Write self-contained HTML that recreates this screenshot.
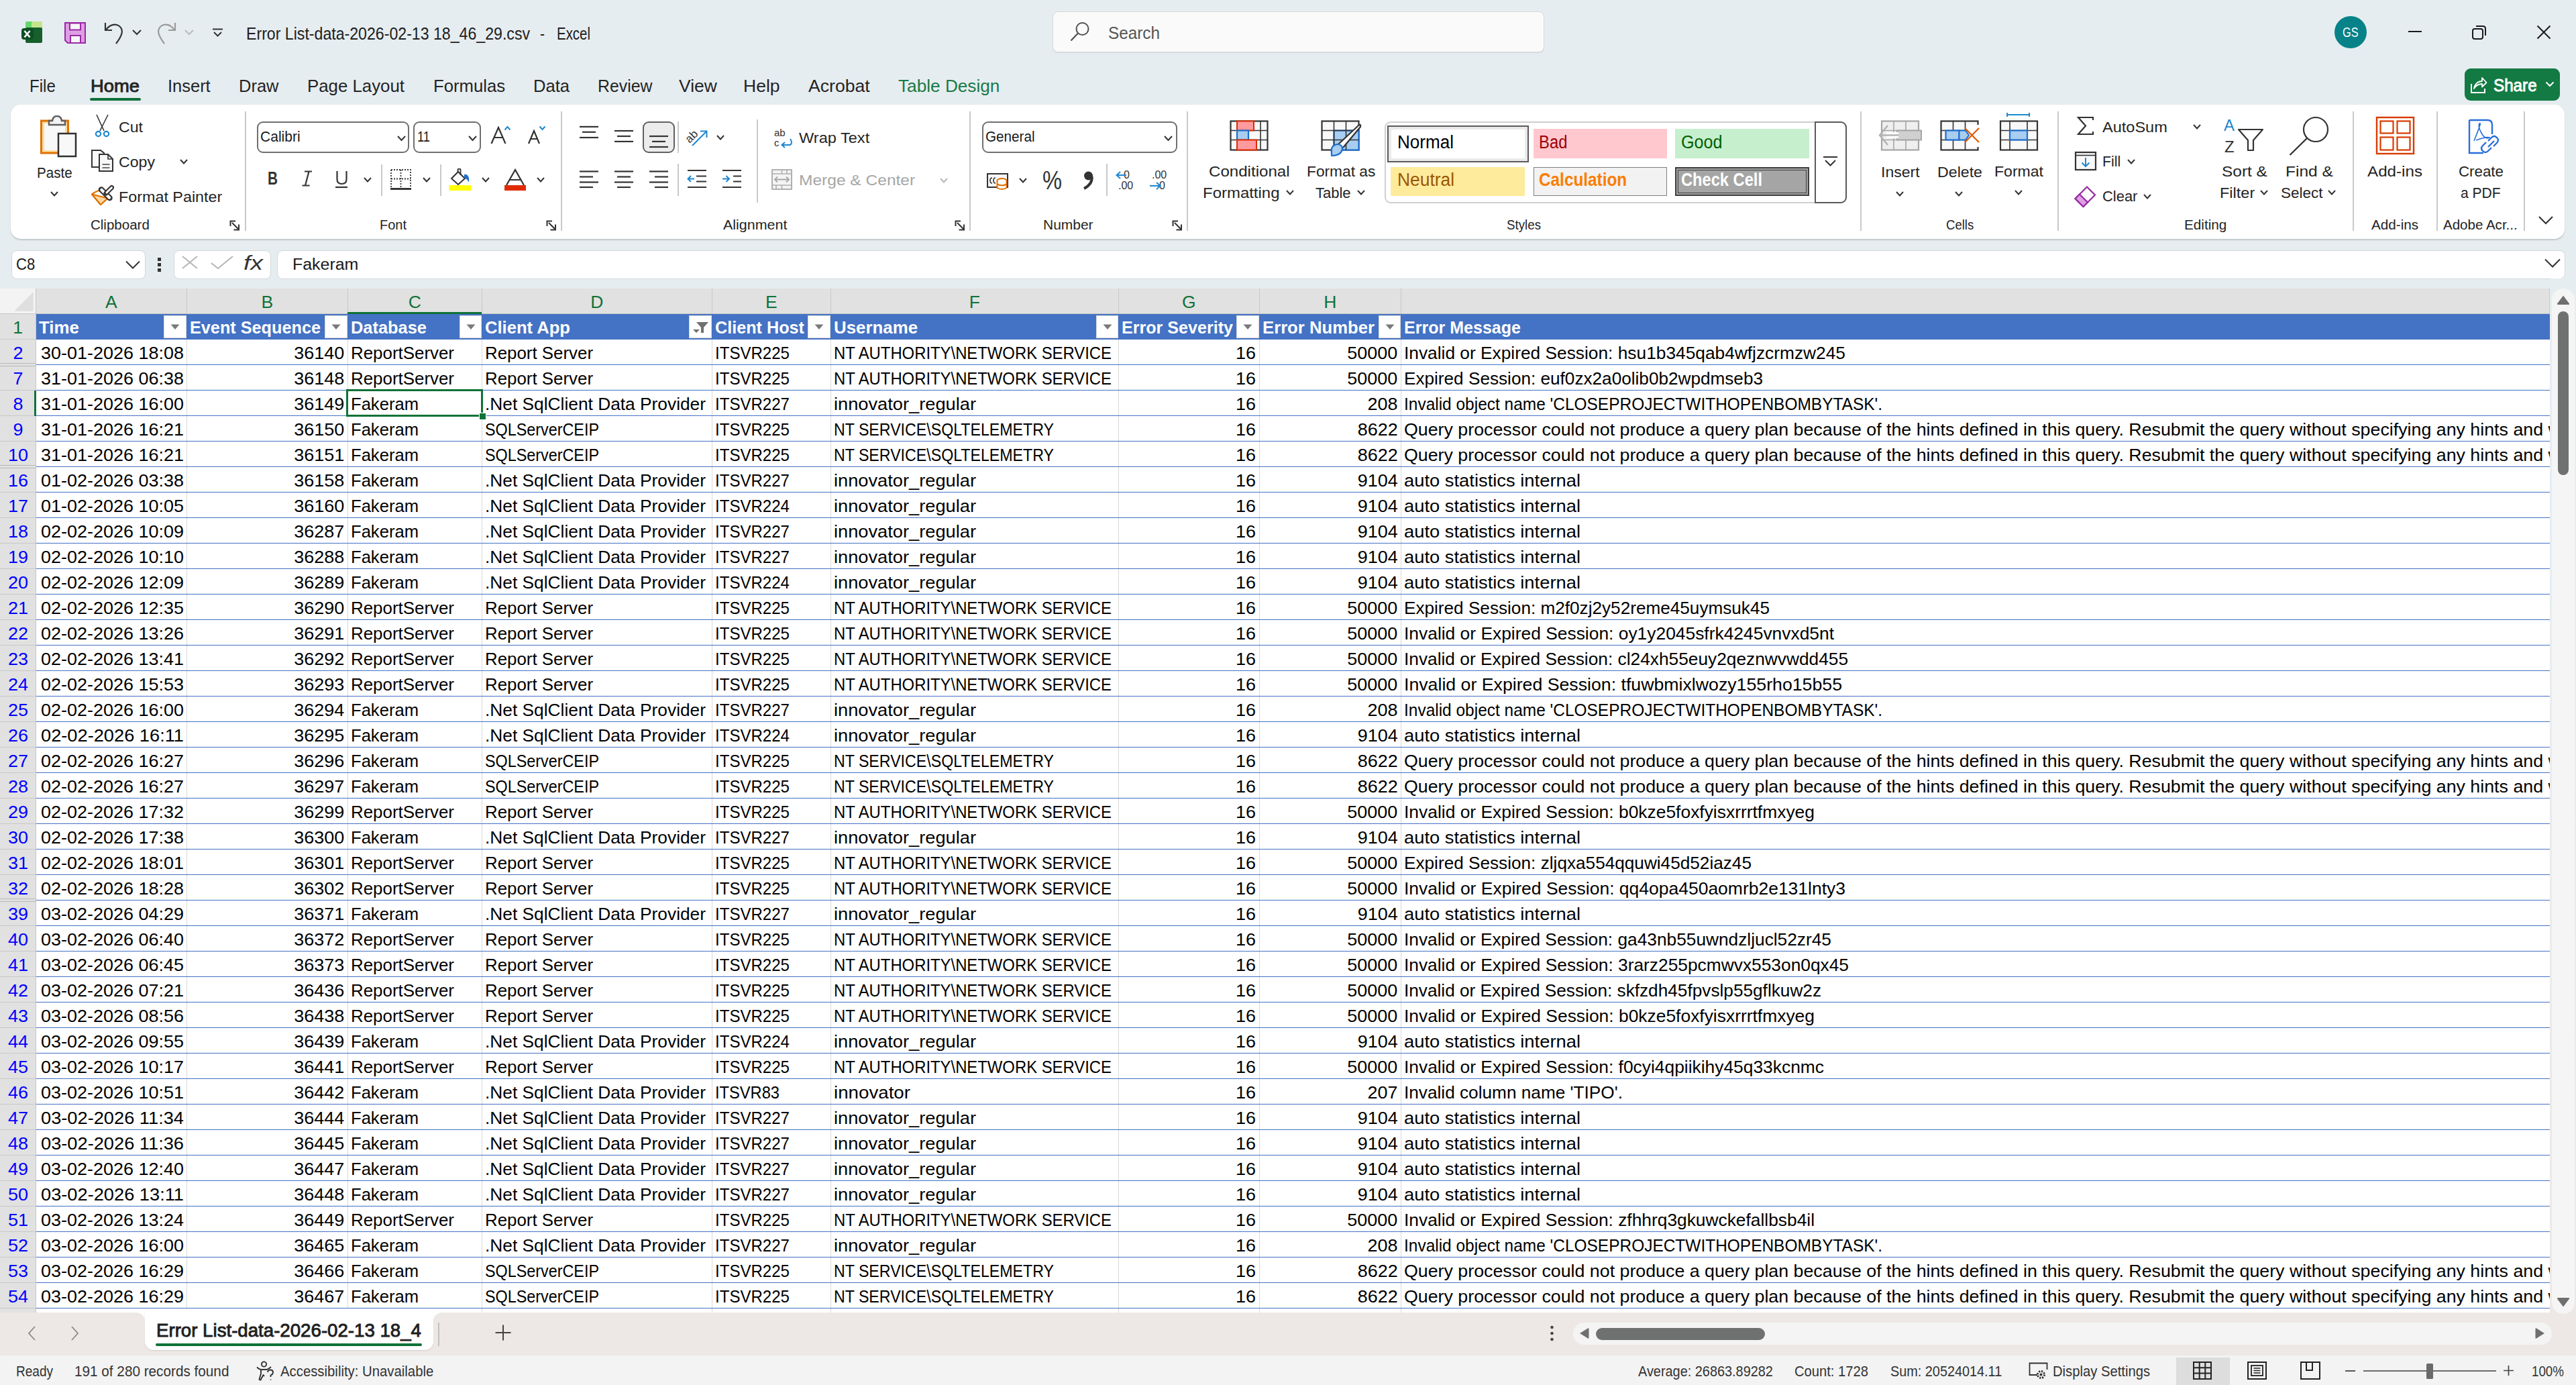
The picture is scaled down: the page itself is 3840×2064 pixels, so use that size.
<!DOCTYPE html>
<html><head><meta charset="utf-8"><style>
html,body{margin:0;padding:0;width:3840px;height:2064px;overflow:hidden;background:#fff}
body{position:relative;font-family:"Liberation Sans", sans-serif}
body>div,body>span,body>svg{position:absolute}
.t{white-space:pre;display:inline-block}
</style></head><body>
<div style="left:0px;top:0px;width:3840px;height:430px;background:#e6edf1"></div>
<svg style="left:31px;top:31px;" width="33" height="34" viewBox="0 0 33 34">
<rect x="7" y="1" width="25" height="12" rx="2" fill="#66d66c"/>
<rect x="16" y="1" width="16" height="12" rx="2" fill="#c5e58c"/>
<rect x="7" y="10" width="25" height="23" rx="2" fill="#175f2b"/>
<rect x="1" y="11" width="18" height="17" rx="4" fill="#0f4f25"/>
<path d="M5.5 15 L13.5 24.5 M13.5 15 L5.5 24.5" stroke="#fff" stroke-width="2.6"/>
</svg>
<svg style="left:96px;top:33px;" width="32" height="32" viewBox="0 0 32 32">
<path d="M1 1 H31 V31 H5 L1 27 Z" fill="#de9fe3" stroke="#9a2aa5" stroke-width="2"/>
<rect x="8" y="1.5" width="16" height="10" fill="#f7f7f7" stroke="#9a2aa5" stroke-width="2"/>
<rect x="9" y="20" width="15" height="11" fill="#f7f7f7" stroke="#9a2aa5" stroke-width="2"/>
</svg>
<svg style="left:152px;top:31px;" width="36" height="36" viewBox="0 0 36 36">
<path d="M5 3 V14 H15" fill="none" stroke="#333" stroke-width="2.2"/>
<path d="M5.5 14 C11 6 20 3 26 8 C33 14 30 22 21 34" fill="none" stroke="#333" stroke-width="2.2"/>
</svg>
<svg style="left:196px;top:43px;" width="16" height="11" viewBox="0 0 16 11"><path d="M2 2 L8 8 L14 2" fill="none" stroke="#333" stroke-width="2"/></svg>
<svg style="left:230px;top:31px;" width="36" height="36" viewBox="0 0 36 36">
<path d="M31 3 V14 H21" fill="none" stroke="#999" stroke-width="2.2"/>
<path d="M30.5 14 C25 6 16 3 10 8 C3 14 6 22 15 34" fill="none" stroke="#999" stroke-width="2.2"/>
</svg>
<svg style="left:274px;top:43px;" width="16" height="11" viewBox="0 0 16 11"><path d="M2 2 L8 8 L14 2" fill="none" stroke="#bbb" stroke-width="2"/></svg>
<svg style="left:316px;top:41px;" width="18" height="16" viewBox="0 0 18 16"><path d="M1 2.5 H16" stroke="#333" stroke-width="2"/><path d="M3 7 L8.5 12.5 L14 7" fill="none" stroke="#333" stroke-width="2"/></svg>
<span class="t" style="top:37.54px;font-size:25px;line-height:25px;color:#202020;left:367px;transform-origin:0 0;transform:scaleX(0.9252);">Error List-data-2026-02-13 18_46_29.csv</span>
<span class="t" style="top:37.54px;font-size:25px;line-height:25px;color:#202020;left:805px;transform-origin:0 0;transform:scaleX(0.8405);">-</span>
<span class="t" style="top:37.54px;font-size:25px;line-height:25px;color:#202020;left:830.4px;transform-origin:0 0;transform:scaleX(0.8178);">Excel</span>
<div style="left:1569px;top:17px;width:733px;height:61px;background:#fafafa;border:1px solid #d6d9db;border-radius:8px;box-sizing:border-box;box-shadow:0 1px 1px rgba(0,0,0,0.08)"></div>
<svg style="left:1593px;top:30px;" width="34" height="36" viewBox="0 0 34 36"><circle cx="20.5" cy="13" r="9" fill="none" stroke="#505050" stroke-width="2"/><path d="M14 19.5 L3.5 30.5" stroke="#505050" stroke-width="2.2"/></svg>
<span class="t" style="top:35.69px;font-size:26px;line-height:26px;color:#555;left:1652px;transform-origin:0 0;transform:scaleX(0.9346);">Search</span>
<div style="left:3480px;top:24px;width:48px;height:48px;background:#078288;border-radius:50%"></div>
<span class="t" style="top:39.19px;font-size:19.5px;line-height:19.5px;color:#fff;left:3491.7px;transform-origin:0 0;transform:scaleX(0.8373);">GS</span>
<div style="left:3590px;top:46px;width:20px;height:2px;background:#1a1a1a"></div>
<svg style="left:3684px;top:36px;" width="24" height="24" viewBox="0 0 24 24"><rect x="2" y="7" width="15" height="15" rx="3" fill="none" stroke="#1a1a1a" stroke-width="2"/><path d="M7 3 H17 Q21 3 21 7 V17" fill="none" stroke="#1a1a1a" stroke-width="2"/></svg>
<svg style="left:3780px;top:36px;" width="24" height="24" viewBox="0 0 24 24"><path d="M2.5 2.5 L21.5 21.5 M21.5 2.5 L2.5 21.5" stroke="#1a1a1a" stroke-width="2"/></svg>
<div style="left:3674px;top:102px;width:142px;height:48px;background:#137a43;border-radius:9px"></div>
<svg style="left:3682px;top:113px;" width="26" height="27" viewBox="0 0 26 27"><path d="M2 12 V25 H22 V19" fill="none" stroke="#fff" stroke-width="2"/><path d="M6 19 C7 12 12 8 18 8 V3 L24.5 10 L18 16.5 V12 C12 12 9 14 6 19 Z" fill="none" stroke="#fff" stroke-width="1.8" stroke-linejoin="round"/></svg>
<span class="t" style="top:113.67px;font-size:26.5px;line-height:26.5px;color:#fff;-webkit-text-stroke:0.9px #fff;left:3716.7px;transform-origin:0 0;transform:scaleX(0.9135);">Share</span>
<svg style="left:3794px;top:121px;" width="14" height="10" viewBox="0 0 14 10"><path d="M1.5 1.5 L7 7 L12.5 1.5" fill="none" stroke="#fff" stroke-width="2"/></svg>
<span class="t" style="top:114.57px;font-size:26.5px;line-height:26.5px;color:#242424;left:43.5px;transform-origin:0 0;transform:scaleX(0.9086);">File</span>
<span class="t" style="top:114.57px;font-size:26.5px;line-height:26.5px;color:#242424;-webkit-text-stroke:0.9px #242424;left:135px;transform-origin:0 0;transform:scaleX(1.0325);">Home</span>
<span class="t" style="top:114.57px;font-size:26.5px;line-height:26.5px;color:#242424;left:250px;transform-origin:0 0;transform:scaleX(0.9611);">Insert</span>
<span class="t" style="top:114.57px;font-size:26.5px;line-height:26.5px;color:#242424;left:356px;transform-origin:0 0;transform:scaleX(0.9621);">Draw</span>
<span class="t" style="top:114.57px;font-size:26.5px;line-height:26.5px;color:#242424;left:458px;transform-origin:0 0;transform:scaleX(0.9743);">Page Layout</span>
<span class="t" style="top:114.57px;font-size:26.5px;line-height:26.5px;color:#242424;left:645.6px;transform-origin:0 0;transform:scaleX(0.9696);">Formulas</span>
<span class="t" style="top:114.57px;font-size:26.5px;line-height:26.5px;color:#242424;left:794.6px;transform-origin:0 0;transform:scaleX(0.9663);">Data</span>
<span class="t" style="top:114.57px;font-size:26.5px;line-height:26.5px;color:#242424;left:890.6px;transform-origin:0 0;transform:scaleX(0.9368);">Review</span>
<span class="t" style="top:114.57px;font-size:26.5px;line-height:26.5px;color:#242424;left:1011.7px;transform-origin:0 0;transform:scaleX(0.9970);">View</span>
<span class="t" style="top:114.57px;font-size:26.5px;line-height:26.5px;color:#242424;left:1108px;transform-origin:0 0;">Help</span>
<span class="t" style="top:114.57px;font-size:26.5px;line-height:26.5px;color:#242424;left:1205px;transform-origin:0 0;transform:scaleX(1.0041);">Acrobat</span>
<span class="t" style="top:114.57px;font-size:26.5px;line-height:26.5px;color:#1a7a45;left:1338.6px;transform-origin:0 0;transform:scaleX(0.9882);">Table Design</span>
<div style="left:133.5px;top:146px;width:76px;height:3.8px;background:#0f7038;border-radius:2px"></div>
<div style="left:16px;top:156px;width:3807px;height:200px;background:#fff;border-radius:15px;box-shadow:0 1.5px 2px rgba(0,0,0,0.16)"></div>
<svg style="left:58px;top:172px;" width="58" height="64" viewBox="0 0 58 64">
<rect x="3.5" y="8" width="40" height="48" fill="#fcdca0" stroke="#e07000" stroke-width="3"/>
<rect x="8" y="12" width="31" height="40" fill="#f8f8f8"/>
<path d="M15 14 V8 H20 Q21 1 27 1 Q33 1 34 8 H39 V14 Z" fill="#f3f3f3" stroke="#5f5f5f" stroke-width="2.5"/>
<rect x="29" y="27" width="26" height="34" fill="#f8f8f8" stroke="#303030" stroke-width="2.5"/>
</svg>
<span class="t" style="top:246.95px;font-size:22.5px;line-height:22.5px;color:#242424;left:55.3px;transform-origin:0 0;transform:scaleX(0.9158);">Paste</span>
<svg style="left:74.0px;top:283.75px;" width="14" height="9.5" viewBox="0 0 14 9.5"><path d="M2 2 L7.0 7.5 L12 2" fill="none" stroke="#333" stroke-width="2"/></svg>
<svg style="left:140px;top:170px;" width="25" height="36" viewBox="0 0 25 36">
<path d="M4 1 L15 25 M21 1 L9 25" stroke="#333" stroke-width="1.6" fill="none"/>
<circle cx="6.5" cy="29.5" r="3.6" fill="#fff" stroke="#1e88d0" stroke-width="2.2"/>
<circle cx="18.5" cy="29.5" r="3.6" fill="#fff" stroke="#1e88d0" stroke-width="2.2"/>
</svg>
<span class="t" style="top:179.15px;font-size:22.5px;line-height:22.5px;color:#242424;left:176.5px;transform-origin:0 0;transform:scaleX(1.0281);">Cut</span>
<svg style="left:135px;top:222px;" width="35" height="36" viewBox="0 0 35 36">
<path d="M2 2 H15 L20 6 V27 H2 Z" fill="#f8f8f8" stroke="#333" stroke-width="2"/>
<path d="M13 8 H26 L33 15 V33 H13 Z" fill="#f8f8f8" stroke="#333" stroke-width="2"/>
<path d="M26 8 V15 H33" fill="none" stroke="#333" stroke-width="1.6"/>
<path d="M17.5 23 H28.5 M17.5 28 H28.5" stroke="#444" stroke-width="1.5"/>
</svg>
<span class="t" style="top:230.75px;font-size:22.5px;line-height:22.5px;color:#242424;left:176.5px;transform-origin:0 0;transform:scaleX(1.0280);">Copy</span>
<svg style="left:267.0px;top:236.25px;" width="14" height="9.5" viewBox="0 0 14 9.5"><path d="M2 2 L7.0 7.5 L12 2" fill="none" stroke="#333" stroke-width="2"/></svg>
<svg style="left:135px;top:274px;" width="35" height="34" viewBox="0 0 35 34">
<path d="M2 15.5 Q8 11 13.5 9.5 L25.5 21.5 L15 31 Z" fill="#fff" stroke="#e07000" stroke-width="2.2" stroke-linejoin="round"/>
<path d="M2 15.5 L25.5 21.5 L15 31 Z" fill="#fdd9a0" stroke="#e07000" stroke-width="2" stroke-linejoin="round"/>
<path d="M16 8.5 L28.5 21" stroke="#333" stroke-width="8.5" stroke-linecap="round"/>
<path d="M16.5 9 L28 20.5" stroke="#fafafa" stroke-width="4.5" stroke-linecap="round"/>
<path d="M23 14 L31.5 5.5" stroke="#333" stroke-width="7" stroke-linecap="round"/>
<path d="M24 13 L31.5 5.5" stroke="#fafafa" stroke-width="3" stroke-linecap="round"/>
</svg>
<span class="t" style="top:282.55px;font-size:22.5px;line-height:22.5px;color:#242424;left:177px;transform-origin:0 0;transform:scaleX(1.0369);">Format Painter</span>
<span class="t" style="top:326.39px;font-size:19.5px;line-height:19.5px;color:#242424;left:134.6px;transform-origin:0 0;transform:scaleX(1.0519);">Clipboard</span>
<svg style="left:341.5px;top:327.5px;" width="17" height="17" viewBox="0 0 17 17"><path d="M1.5 9 V1.5 H9" fill="none" stroke="#333" stroke-width="2"/><path d="M4 4 L14 14 M14 6.5 V14.5 H6.5" fill="none" stroke="#333" stroke-width="2"/></svg>
<div style="left:364.5px;top:166px;width:2px;height:178px;background:#c9c9c9"></div>
<div style="left:383px;top:180.5px;width:227px;height:47px;border:2px solid #707070;border-radius:9px;box-sizing:border-box;background:#fff"></div>
<span class="t" style="top:193.80px;font-size:21.5px;line-height:21.5px;color:#1a1a1a;left:387.6px;transform-origin:0 0;transform:scaleX(0.9797);">Calibri</span>
<svg style="left:590.5px;top:200.5px;" width="15" height="10" viewBox="0 0 15 10"><path d="M2 2 L7.5 8 L13 2" fill="none" stroke="#333" stroke-width="2"/></svg>
<div style="left:615.5px;top:180.5px;width:101.5px;height:47px;border:2px solid #707070;border-radius:9px;box-sizing:border-box;background:#fff"></div>
<span class="t" style="top:193.80px;font-size:21.5px;line-height:21.5px;color:#1a1a1a;left:622px;transform-origin:0 0;transform:scaleX(0.8509);">11</span>
<svg style="left:697.0px;top:200.5px;" width="15" height="10" viewBox="0 0 15 10"><path d="M2 2 L7.5 8 L13 2" fill="none" stroke="#333" stroke-width="2"/></svg>
<svg style="left:730px;top:188px;" width="26" height="27" viewBox="0 0 26 27"><path d="M2.5 26 L13 2 L23.5 26 M6.5 17 H19.5" fill="none" stroke="#333" stroke-width="2.2"/></svg>
<svg style="left:751px;top:187px;" width="12" height="8" viewBox="0 0 12 8"><path d="M1.5 6.5 L5.5 2 L9.5 6.5" fill="none" stroke="#1e88d0" stroke-width="2"/></svg>
<svg style="left:786px;top:193px;" width="20" height="22" viewBox="0 0 20 22"><path d="M2 21 L10 2 L18 21 M5 14 H15" fill="none" stroke="#333" stroke-width="2.2"/></svg>
<svg style="left:803px;top:187px;" width="12" height="8" viewBox="0 0 12 8"><path d="M1.5 1.5 L5.5 6 L9.5 1.5" fill="none" stroke="#1e88d0" stroke-width="2"/></svg>
<span class="t" style="top:252.30px;font-size:28px;line-height:28px;color:#333;font-weight:700;left:399px;transform-origin:0 0;transform:scaleX(0.7413);">B</span>
<svg style="left:449px;top:254px;" width="18" height="24" viewBox="0 0 18 24"><path d="M5 1.5 H16 M1.5 22.5 H12.5 M11.5 1.5 L6 22.5" fill="none" stroke="#333" stroke-width="2.2"/></svg>
<svg style="left:499px;top:254px;" width="21" height="27" viewBox="0 0 21 27"><path d="M3.5 1 V13 Q3.5 20 10.5 20 Q17.5 20 17.5 13 V1" fill="none" stroke="#333" stroke-width="2.2"/><path d="M1 25 H19" stroke="#333" stroke-width="2.2"/></svg>
<svg style="left:540.5px;top:263.25px;" width="14" height="9.5" viewBox="0 0 14 9.5"><path d="M2 2 L7.0 7.5 L12 2" fill="none" stroke="#333" stroke-width="2"/></svg>
<div style="left:568px;top:244.5px;width:2px;height:47.5px;background:#c9c9c9"></div>
<svg style="left:581px;top:251px;" width="33" height="33" viewBox="0 0 33 33">
<path d="M2 2 H31 V29 M2 2 V29 M16.5 2 V29 M2 15.5 H31" fill="none" stroke="#333" stroke-width="1.8" stroke-dasharray="2 2"/>
<path d="M1 30.5 H32" stroke="#1a1a1a" stroke-width="2.6"/>
</svg>
<svg style="left:629.0px;top:263.25px;" width="14" height="9.5" viewBox="0 0 14 9.5"><path d="M2 2 L7.0 7.5 L12 2" fill="none" stroke="#333" stroke-width="2"/></svg>
<div style="left:656px;top:244.5px;width:2px;height:47.5px;background:#c9c9c9"></div>
<svg style="left:669px;top:251px;" width="35" height="34" viewBox="0 0 35 34">
<path d="M4 15 L14 5 L24 15 L14 24 Z" fill="#fafafa" stroke="#333" stroke-width="2"/>
<path d="M13.5 6 V1.5 Q15.5 -0.5 17.5 1.5 V10" fill="none" stroke="#333" stroke-width="1.8"/>
<path d="M23 9 Q28 8 30 14 L30 21 Q28 16 23 14 Z" fill="#1e6fcf"/>
<rect x="0.5" y="25" width="33" height="8" fill="#ffff00"/>
</svg>
<svg style="left:717.0px;top:263.25px;" width="14" height="9.5" viewBox="0 0 14 9.5"><path d="M2 2 L7.0 7.5 L12 2" fill="none" stroke="#333" stroke-width="2"/></svg>
<svg style="left:752px;top:251px;" width="32" height="26" viewBox="0 0 32 26"><path d="M3 25 L16 2 L29 25 M8 17 H24" fill="none" stroke="#333" stroke-width="2.2"/></svg>
<div style="left:752px;top:276px;width:32px;height:8px;background:#e02b00"></div>
<svg style="left:799.0px;top:263.25px;" width="14" height="9.5" viewBox="0 0 14 9.5"><path d="M2 2 L7.0 7.5 L12 2" fill="none" stroke="#333" stroke-width="2"/></svg>
<span class="t" style="top:326.49px;font-size:19.5px;line-height:19.5px;color:#242424;left:566px;transform-origin:0 0;transform:scaleX(1.0248);">Font</span>
<svg style="left:813.5px;top:327.5px;" width="17" height="17" viewBox="0 0 17 17"><path d="M1.5 9 V1.5 H9" fill="none" stroke="#333" stroke-width="2"/><path d="M4 4 L14 14 M14 6.5 V14.5 H6.5" fill="none" stroke="#333" stroke-width="2"/></svg>
<div style="left:836px;top:166px;width:2px;height:178px;background:#c9c9c9"></div>
<svg style="left:863px;top:186px;" width="30" height="40" viewBox="0 0 30 40"><path d="M1 2.9 H29" stroke="#333" stroke-width="2.2"/><path d="M5 10.8 H25" stroke="#333" stroke-width="2.2"/><path d="M1 19 H29" stroke="#333" stroke-width="2.2"/></svg>
<svg style="left:915px;top:192px;" width="30" height="40" viewBox="0 0 30 40"><path d="M1 3 H29" stroke="#333" stroke-width="2.2"/><path d="M5 11 H25" stroke="#333" stroke-width="2.2"/><path d="M1 18.9 H29" stroke="#333" stroke-width="2.2"/></svg>
<div style="left:958px;top:180.5px;width:47.5px;height:47.5px;background:#ececec;border:2px solid #616161;border-radius:9px;box-sizing:border-box"></div>
<svg style="left:967px;top:200px;" width="30" height="40" viewBox="0 0 30 40"><path d="M1 3 H29" stroke="#333" stroke-width="2.2"/><path d="M5 10.9 H25" stroke="#333" stroke-width="2.2"/><path d="M1 19 H29" stroke="#333" stroke-width="2.2"/></svg>
<div style="left:1010px;top:181px;width:2px;height:47px;background:#c9c9c9"></div>
<svg style="left:1022px;top:186px;" width="36" height="34" viewBox="0 0 36 34">
<text x="0" y="0" transform="translate(6,28) rotate(-45)" font-family="Liberation Sans" font-size="17" fill="#333">ab</text>
<path d="M10 31 L31 10 M22 9.5 H31.5 V19" fill="none" stroke="#1e88d0" stroke-width="2"/>
</svg>
<svg style="left:1067.0px;top:200.25px;" width="14" height="9.5" viewBox="0 0 14 9.5"><path d="M2 2 L7.0 7.5 L12 2" fill="none" stroke="#333" stroke-width="2"/></svg>
<div style="left:1128px;top:178px;width:2px;height:124px;background:#c9c9c9"></div>
<svg style="left:1152px;top:189px;" width="34" height="33" viewBox="0 0 34 33">
<text x="2" y="14" font-family="Liberation Sans" font-size="15" fill="#333">ab</text>
<text x="2" y="29" font-family="Liberation Sans" font-size="15" fill="#333">c</text>
<path d="M26 18 Q30 24 26 27 H14 M18 23 L13.5 27 L18 31" fill="none" stroke="#1e88d0" stroke-width="2"/>
</svg>
<span class="t" style="top:194.95px;font-size:22.5px;line-height:22.5px;color:#242424;left:1190.7px;transform-origin:0 0;transform:scaleX(1.0471);">Wrap Text</span>
<svg style="left:863px;top:253px;" width="30" height="40" viewBox="0 0 30 40"><path d="M1 2.5 H29" stroke="#333" stroke-width="2.2"/><path d="M1 10.5 H21" stroke="#333" stroke-width="2.2"/><path d="M1 18.5 H29" stroke="#333" stroke-width="2.2"/><path d="M1 26 H21" stroke="#333" stroke-width="2.2"/></svg>
<svg style="left:915px;top:253px;" width="30" height="40" viewBox="0 0 30 40"><path d="M1 2.5 H29" stroke="#333" stroke-width="2.2"/><path d="M5 10.5 H25" stroke="#333" stroke-width="2.2"/><path d="M1 18.5 H29" stroke="#333" stroke-width="2.2"/><path d="M5 26 H25" stroke="#333" stroke-width="2.2"/></svg>
<svg style="left:967px;top:253px;" width="30" height="40" viewBox="0 0 30 40"><path d="M1 2.5 H29" stroke="#333" stroke-width="2.2"/><path d="M9 10.5 H29" stroke="#333" stroke-width="2.2"/><path d="M1 18.5 H29" stroke="#333" stroke-width="2.2"/><path d="M9 26 H29" stroke="#333" stroke-width="2.2"/></svg>
<div style="left:1010px;top:244px;width:2px;height:48px;background:#c9c9c9"></div>
<svg style="left:1024px;top:252px;" width="32" height="30" viewBox="0 0 32 30">
<path d="M1 2 H29 M14 10.5 H29 M14 18.5 H29 M1 27 H29" stroke="#333" stroke-width="2.2"/>
<path d="M11 14.5 H1.5 M6 10 L1.5 14.5 L6 19" fill="none" stroke="#1e88d0" stroke-width="2"/>
</svg>
<svg style="left:1076px;top:252px;" width="32" height="30" viewBox="0 0 32 30">
<path d="M1 2 H29 M17 10.5 H29 M17 18.5 H29 M1 27 H29" stroke="#333" stroke-width="2.2"/>
<path d="M1 14.5 H11 M6.5 10 L11 14.5 L6.5 19" fill="none" stroke="#1e88d0" stroke-width="2"/>
</svg>
<svg style="left:1149px;top:251px;" width="33" height="33" viewBox="0 0 33 33">
<rect x="2" y="2" width="29" height="29" fill="#f4f4f4" stroke="#b0b0b0" stroke-width="2"/>
<path d="M2 8 H31 M2 25 H31 M16.5 2 V8 M16.5 25 V31 M8 25 V31 M24 2 V8" stroke="#b0b0b0" stroke-width="1.6"/>
<path d="M6 16.5 H27 M10 12.5 L6 16.5 L10 20.5 M23 12.5 L27 16.5 L23 20.5" fill="none" stroke="#a8a8a8" stroke-width="1.8"/>
</svg>
<span class="t" style="top:257.95px;font-size:22.5px;line-height:22.5px;color:#a6a6a6;left:1190.7px;transform-origin:0 0;transform:scaleX(1.0905);">Merge &amp; Center</span>
<svg style="left:1400.0px;top:263.75px;" width="14" height="9.5" viewBox="0 0 14 9.5"><path d="M2 2 L7.0 7.5 L12 2" fill="none" stroke="#b8b8b8" stroke-width="2"/></svg>
<span class="t" style="top:326.49px;font-size:19.5px;line-height:19.5px;color:#242424;left:1078.2px;transform-origin:0 0;transform:scaleX(1.1001);">Alignment</span>
<svg style="left:1422.5px;top:327.5px;" width="17" height="17" viewBox="0 0 17 17"><path d="M1.5 9 V1.5 H9" fill="none" stroke="#333" stroke-width="2"/><path d="M4 4 L14 14 M14 6.5 V14.5 H6.5" fill="none" stroke="#333" stroke-width="2"/></svg>
<div style="left:1445px;top:166px;width:2px;height:178px;background:#c9c9c9"></div>
<div style="left:1463.5px;top:180.5px;width:291px;height:47px;border:2px solid #707070;border-radius:9px;box-sizing:border-box;background:#fff"></div>
<span class="t" style="top:193.70px;font-size:21.5px;line-height:21.5px;color:#1a1a1a;left:1468.8px;transform-origin:0 0;transform:scaleX(0.9621);">General</span>
<svg style="left:1734.0px;top:200.5px;" width="15" height="10" viewBox="0 0 15 10"><path d="M2 2 L7.5 8 L13 2" fill="none" stroke="#333" stroke-width="2"/></svg>
<svg style="left:1470px;top:257px;" width="35" height="28" viewBox="0 0 35 28">
<rect x="2" y="2" width="30" height="20" fill="#f7f7f7" stroke="#333" stroke-width="2"/>
<path d="M9 8 Q6 8 6 12 Q6 16 9 16 M14 8 Q11 8 11 12 Q11 16 14 16" fill="none" stroke="#333" stroke-width="1.6"/>
<ellipse cx="23.5" cy="12" rx="7" ry="3" fill="#fff" stroke="#e07000" stroke-width="2"/>
<path d="M16.5 12 V23 Q23.5 27 30.5 23 V12" fill="#fff" stroke="#e07000" stroke-width="2"/>
<path d="M16.5 17.5 Q23.5 21 30.5 17.5" fill="none" stroke="#e07000" stroke-width="2"/>
</svg>
<svg style="left:1518.0px;top:263.75px;" width="14" height="9.5" viewBox="0 0 14 9.5"><path d="M2 2 L7.0 7.5 L12 2" fill="none" stroke="#333" stroke-width="2"/></svg>
<span class="t" style="top:249.83px;font-size:38px;line-height:38px;color:#333;left:1554px;transform-origin:0 0;transform:scaleX(0.8581);">%</span>
<svg style="left:1613px;top:254px;" width="19" height="29" viewBox="0 0 19 29"><circle cx="9.5" cy="8" r="6.5" fill="#333"/><path d="M14.5 9 Q16 20 3 27" fill="none" stroke="#333" stroke-width="4"/></svg>
<div style="left:1649px;top:244px;width:2px;height:48px;background:#c9c9c9"></div>
<svg style="left:1661px;top:251px;" width="34" height="33" viewBox="0 0 34 33">
<text x="14" y="15" font-family="Liberation Sans" font-size="16" fill="#333">0</text>
<text x="6" y="31" font-family="Liberation Sans" font-size="16" fill="#333">.00</text>
<path d="M18 10 H4 M9 5 L3.5 10 L9 15" fill="none" stroke="#1e88d0" stroke-width="2"/>
</svg>
<svg style="left:1712px;top:251px;" width="34" height="33" viewBox="0 0 34 33">
<text x="5" y="15" font-family="Liberation Sans" font-size="16" fill="#333">.00</text>
<text x="16" y="31" font-family="Liberation Sans" font-size="16" fill="#333">0</text>
<path d="M2 26 H17 M12 21 L17.5 26 L12 31" fill="none" stroke="#1e88d0" stroke-width="2"/>
</svg>
<span class="t" style="top:326.49px;font-size:19.5px;line-height:19.5px;color:#242424;left:1555.3px;transform-origin:0 0;transform:scaleX(1.0756);">Number</span>
<svg style="left:1746.5px;top:327.5px;" width="17" height="17" viewBox="0 0 17 17"><path d="M1.5 9 V1.5 H9" fill="none" stroke="#333" stroke-width="2"/><path d="M4 4 L14 14 M14 6.5 V14.5 H6.5" fill="none" stroke="#333" stroke-width="2"/></svg>
<div style="left:1769px;top:166px;width:2px;height:178px;background:#c9c9c9"></div>
<svg style="left:1833px;top:179px;" width="58" height="47" viewBox="0 0 58 47">
<rect x="1.5" y="1.5" width="55" height="43" fill="#f8f8f8" stroke="#333" stroke-width="2.2"/>
<path d="M11 1.5 V44.5 M46 1.5 V44.5 M1.5 15.5 H56.5 M1.5 29.5 H56.5" stroke="#333" stroke-width="1.6"/>
<rect x="11" y="1.5" width="25" height="14" fill="#ff9a9f" stroke="#e02b00" stroke-width="2"/>
<rect x="11" y="15.5" width="17" height="14" fill="#a8cdf0" stroke="#1e6fcf" stroke-width="2.2"/>
<rect x="11" y="29.5" width="29" height="15" fill="#ff9a9f" stroke="#e02b00" stroke-width="2"/>
</svg>
<span class="t" style="top:244.65px;font-size:22.5px;line-height:22.5px;color:#242424;left:1801.7px;transform-origin:0 0;transform:scaleX(1.0713);">Conditional</span>
<span class="t" style="top:277.25px;font-size:22.5px;line-height:22.5px;color:#242424;left:1793.4px;transform-origin:0 0;transform:scaleX(1.0647);">Formatting</span>
<svg style="left:1916.0px;top:281.75px;" width="14" height="9.5" viewBox="0 0 14 9.5"><path d="M2 2 L7.0 7.5 L12 2" fill="none" stroke="#333" stroke-width="2"/></svg>
<svg style="left:1969px;top:179px;" width="64" height="56" viewBox="0 0 64 56">
<rect x="1.5" y="1.5" width="55" height="43" fill="#f8f8f8" stroke="#333" stroke-width="2.2"/>
<rect x="19.5" y="15.5" width="37" height="29" fill="#a8cdf0" stroke="#1e6fcf" stroke-width="2.2"/>
<path d="M19.5 1.5 V44.5 M37.5 1.5 V44.5 M1.5 15.5 H56.5 M1.5 29.5 H56.5" stroke="#333" stroke-width="1.6"/>
<path d="M26 36 L56 8 Q60 5 59 10 L33 41" fill="#fff" stroke="#333" stroke-width="2.2"/>
<path d="M16 49 Q14 38 24 36 Q32 36 32 43 Q30 53 16 53 Z" fill="#a8cdf0" stroke="#1e6fcf" stroke-width="2.2"/>
</svg>
<span class="t" style="top:244.65px;font-size:22.5px;line-height:22.5px;color:#242424;left:1948px;transform-origin:0 0;transform:scaleX(1.0110);">Format as</span>
<span class="t" style="top:277.25px;font-size:22.5px;line-height:22.5px;color:#242424;left:1961px;transform-origin:0 0;transform:scaleX(0.9778);">Table</span>
<svg style="left:2022.0px;top:281.75px;" width="14" height="9.5" viewBox="0 0 14 9.5"><path d="M2 2 L7.0 7.5 L12 2" fill="none" stroke="#333" stroke-width="2"/></svg>
<div style="left:2063.5px;top:180.5px;width:689px;height:122.5px;border:2px solid #cfcfcf;border-radius:9px;box-sizing:border-box;background:#fff"></div>
<div style="left:2067.5px;top:186.5px;width:211px;height:55px;border:2px solid #5a5a5a;box-sizing:border-box;background:#fff;box-shadow:inset 0 0 0 4px #eaeaea"></div>
<span class="t" style="top:199.44px;font-size:27px;line-height:27px;color:#000;left:2082.8px;transform-origin:0 0;transform:scaleX(0.9653);">Normal</span>
<div style="left:2285.5px;top:192px;width:199.5px;height:43.5px;background:#ffc7ce"></div>
<span class="t" style="top:199.44px;font-size:27px;line-height:27px;color:#9c0006;left:2294px;transform-origin:0 0;transform:scaleX(0.8825);">Bad</span>
<div style="left:2497px;top:192px;width:200px;height:43.5px;background:#c6efce"></div>
<span class="t" style="top:199.44px;font-size:27px;line-height:27px;color:#006100;left:2505.9px;transform-origin:0 0;transform:scaleX(0.9309);">Good</span>
<div style="left:2073px;top:248.5px;width:200px;height:43px;background:#ffeb9c"></div>
<span class="t" style="top:255.14px;font-size:27px;line-height:27px;color:#9c5700;left:2082.8px;transform-origin:0 0;transform:scaleX(0.9788);">Neutral</span>
<div style="left:2285.5px;top:248.5px;width:199.5px;height:43px;background:#f2f2f2;border:1.5px solid #7f7f7f;box-sizing:border-box"></div>
<span class="t" style="top:255.14px;font-size:27px;line-height:27px;color:#fa7d00;font-weight:700;left:2294px;transform-origin:0 0;transform:scaleX(0.9015);">Calculation</span>
<div style="left:2497px;top:248.5px;width:200px;height:43px;background:#a5a5a5;border:2px solid #3f3f3f;box-sizing:border-box;box-shadow:inset 0 0 0 2px #a5a5a5, inset 0 0 0 3px #3f3f3f"></div>
<span class="t" style="top:255.14px;font-size:27px;line-height:27px;color:#fff;font-weight:700;left:2505.9px;transform-origin:0 0;transform:scaleX(0.8764);">Check Cell</span>
<div style="left:2705px;top:180.5px;width:47.5px;height:122.5px;border:2px solid #5a5a5a;border-radius:0 9px 9px 0;box-sizing:border-box;background:#fff"></div>
<svg style="left:2716px;top:232px;" width="26" height="18" viewBox="0 0 26 18"><path d="M2 2 H23" stroke="#333" stroke-width="2"/><path d="M5 7 L12.5 14.5 L20 7" fill="none" stroke="#333" stroke-width="2"/></svg>
<span class="t" style="top:326.49px;font-size:19.5px;line-height:19.5px;color:#242424;left:2246px;transform-origin:0 0;transform:scaleX(0.9603);">Styles</span>
<div style="left:2772.5px;top:166px;width:2px;height:178px;background:#c9c9c9"></div>
<svg style="left:2800px;top:179px;" width="66" height="46" viewBox="0 0 66 46">
<rect x="5" y="1.5" width="55" height="43" fill="#efefef" stroke="#a6a6a6" stroke-width="2.2"/>
<path d="M23 1.5 V44.5 M41 1.5 V44.5 M5 15.5 H60 M5 29.5 H60" stroke="#a6a6a6" stroke-width="1.6"/>
<rect x="28" y="15.5" width="36" height="14" fill="#d0d0d0" stroke="#a6a6a6" stroke-width="2"/>
<path d="M30 20 H12 M30 25 H12" stroke="#fff" stroke-width="4"/>
<path d="M14 8 L2 22.5 L14 37" fill="none" stroke="#b3b3b3" stroke-width="2.5"/>
<path d="M30 22.5 H4" stroke="#b3b3b3" stroke-width="2.5"/>
</svg>
<span class="t" style="top:246.35px;font-size:22.5px;line-height:22.5px;color:#242424;left:2804.2px;transform-origin:0 0;transform:scaleX(1.0234);">Insert</span>
<svg style="left:2825.0px;top:283.75px;" width="14" height="9.5" viewBox="0 0 14 9.5"><path d="M2 2 L7.0 7.5 L12 2" fill="none" stroke="#333" stroke-width="2"/></svg>
<svg style="left:2892px;top:179px;" width="62" height="46" viewBox="0 0 62 46">
<rect x="1.5" y="1.5" width="55" height="43" fill="#f8f8f8" stroke="#333" stroke-width="2.2"/>
<path d="M19.5 1.5 V44.5 M37.5 1.5 V44.5 M1.5 15.5 H56.5 M1.5 29.5 H56.5" stroke="#333" stroke-width="1.6"/>
<rect x="41" y="7" width="20" height="33" fill="#fff"/>
<rect x="8.5" y="15.5" width="20" height="14" fill="#a8cdf0" stroke="#1e6fcf" stroke-width="2.2"/>
<path d="M28.5 15.5 H38 L43 22.5 L38 29.5 H28.5 Z" fill="#a8cdf0" stroke="#1e6fcf" stroke-width="2"/>
<path d="M37 12 L58 33 M58 12 L37 33" stroke="#e05a00" stroke-width="2.2"/>
</svg>
<span class="t" style="top:246.35px;font-size:22.5px;line-height:22.5px;color:#242424;left:2887.6px;transform-origin:0 0;transform:scaleX(1.0300);">Delete</span>
<svg style="left:2913.0px;top:283.75px;" width="14" height="9.5" viewBox="0 0 14 9.5"><path d="M2 2 L7.0 7.5 L12 2" fill="none" stroke="#333" stroke-width="2"/></svg>
<svg style="left:2980px;top:168px;" width="60" height="58" viewBox="0 0 60 58">
<path d="M12 3 H45 M12 0 V6 M45 0 V6" stroke="#1e88d0" stroke-width="2" stroke-dasharray="0"/>
<rect x="2" y="12.5" width="55" height="43" fill="#f8f8f8" stroke="#333" stroke-width="2.2"/>
<path d="M16 12.5 V55.5 M42 12.5 V55.5 M2 26.5 H57 M2 40.5 H57" stroke="#333" stroke-width="1.6"/>
<rect x="16" y="26.5" width="26" height="14" fill="#a8cdf0" stroke="#1e6fcf" stroke-width="2.2"/>
</svg>
<span class="t" style="top:244.95px;font-size:22.5px;line-height:22.5px;color:#242424;left:2973.4px;transform-origin:0 0;transform:scaleX(1.0243);">Format</span>
<svg style="left:3002.0px;top:281.75px;" width="14" height="9.5" viewBox="0 0 14 9.5"><path d="M2 2 L7.0 7.5 L12 2" fill="none" stroke="#333" stroke-width="2"/></svg>
<span class="t" style="top:326.19px;font-size:19.5px;line-height:19.5px;color:#242424;left:2900.7px;transform-origin:0 0;transform:scaleX(0.9505);">Cells</span>
<div style="left:3067px;top:166px;width:2px;height:178px;background:#c9c9c9"></div>
<svg style="left:3095px;top:172px;" width="30" height="32" viewBox="0 0 30 32"><path d="M25 7 V3 H3 L14 15.5 L3 28 H25 V24" fill="none" stroke="#333" stroke-width="2.2"/></svg>
<span class="t" style="top:178.95px;font-size:22.5px;line-height:22.5px;color:#242424;left:3133.7px;transform-origin:0 0;transform:scaleX(1.0458);">AutoSum</span>
<svg style="left:3268.0px;top:183.75px;" width="14" height="9.5" viewBox="0 0 14 9.5"><path d="M2 2 L7.0 7.5 L12 2" fill="none" stroke="#333" stroke-width="2"/></svg>
<svg style="left:3092px;top:225px;" width="34" height="30" viewBox="0 0 34 30">
<rect x="2" y="2" width="30" height="26" fill="#f8f8f8" stroke="#333" stroke-width="2.2"/>
<path d="M2 6.5 H32" stroke="#333" stroke-width="1.6"/>
<path d="M17 10 V23 M11.5 17.5 L17 23 L22.5 17.5" fill="none" stroke="#1e88d0" stroke-width="2"/>
</svg>
<span class="t" style="top:230.15px;font-size:22.5px;line-height:22.5px;color:#242424;left:3134.3px;transform-origin:0 0;transform:scaleX(0.9461);">Fill</span>
<svg style="left:3170.0px;top:236.25px;" width="14" height="9.5" viewBox="0 0 14 9.5"><path d="M2 2 L7.0 7.5 L12 2" fill="none" stroke="#333" stroke-width="2"/></svg>
<svg style="left:3091px;top:275px;" width="35" height="35" viewBox="0 0 35 35">
<path d="M2.5 21 L20 3.5 L32 15.5 L14.5 33 Z" fill="#fafafa" stroke="#9a2aa5" stroke-width="2.2"/>
<path d="M2.5 21 L9 14.5 L21 26.5 L14.5 33 Z" fill="#de9fe3" stroke="#9a2aa5" stroke-width="2.2"/>
</svg>
<span class="t" style="top:282.25px;font-size:22.5px;line-height:22.5px;color:#242424;left:3134.3px;transform-origin:0 0;transform:scaleX(0.9743);">Clear</span>
<svg style="left:3194.0px;top:287.75px;" width="14" height="9.5" viewBox="0 0 14 9.5"><path d="M2 2 L7.0 7.5 L12 2" fill="none" stroke="#333" stroke-width="2"/></svg>
<svg style="left:3315px;top:173px;" width="62" height="57" viewBox="0 0 62 57">
<text x="0" y="22" font-family="Liberation Sans" font-size="24" fill="#1e88d0">A</text>
<text x="1" y="54" font-family="Liberation Sans" font-size="24" fill="#333">Z</text>
<path d="M22 20 H58 L44 36 V51 H36 V36 Z" fill="none" stroke="#333" stroke-width="2.2" stroke-linejoin="round"/>
</svg>
<span class="t" style="top:244.65px;font-size:22.5px;line-height:22.5px;color:#242424;left:3312.3px;transform-origin:0 0;transform:scaleX(1.0859);">Sort &amp;</span>
<span class="t" style="top:277.25px;font-size:22.5px;line-height:22.5px;color:#242424;left:3308.6px;transform-origin:0 0;transform:scaleX(1.0440);">Filter</span>
<svg style="left:3367.5px;top:281.75px;" width="14" height="9.5" viewBox="0 0 14 9.5"><path d="M2 2 L7.0 7.5 L12 2" fill="none" stroke="#333" stroke-width="2"/></svg>
<svg style="left:3411px;top:172px;" width="62" height="62" viewBox="0 0 62 62"><circle cx="41" cy="21" r="18" fill="none" stroke="#333" stroke-width="2.2"/><path d="M28 34 L2.5 59" stroke="#333" stroke-width="2.4"/></svg>
<span class="t" style="top:244.65px;font-size:22.5px;line-height:22.5px;color:#242424;left:3407.4px;transform-origin:0 0;transform:scaleX(1.0887);">Find &amp;</span>
<span class="t" style="top:277.25px;font-size:22.5px;line-height:22.5px;color:#242424;left:3400px;transform-origin:0 0;">Select</span>
<svg style="left:3469.0px;top:281.75px;" width="14" height="9.5" viewBox="0 0 14 9.5"><path d="M2 2 L7.0 7.5 L12 2" fill="none" stroke="#333" stroke-width="2"/></svg>
<span class="t" style="top:326.19px;font-size:19.5px;line-height:19.5px;color:#242424;left:3256.4px;transform-origin:0 0;transform:scaleX(1.0633);">Editing</span>
<div style="left:3506.5px;top:166px;width:2px;height:178px;background:#c9c9c9"></div>
<svg style="left:3541px;top:173px;" width="59" height="58" viewBox="0 0 59 58">
<rect x="2" y="2" width="55" height="54" fill="none" stroke="#d83b01" stroke-width="2.4"/>
<rect x="7.5" y="7.5" width="19" height="18" fill="none" stroke="#d83b01" stroke-width="2.2"/>
<rect x="32.5" y="7.5" width="19" height="18" fill="none" stroke="#d83b01" stroke-width="2.2"/>
<rect x="7.5" y="31.5" width="19" height="19" fill="none" stroke="#d83b01" stroke-width="2.2"/>
<rect x="32.5" y="31.5" width="19" height="19" fill="none" stroke="#d83b01" stroke-width="2.2"/>
</svg>
<span class="t" style="top:244.65px;font-size:22.5px;line-height:22.5px;color:#242424;left:3529.3px;transform-origin:0 0;transform:scaleX(1.0747);">Add-ins</span>
<span class="t" style="top:326.19px;font-size:19.5px;line-height:19.5px;color:#242424;left:3534.9px;transform-origin:0 0;transform:scaleX(1.0601);">Add-ins</span>
<div style="left:3632px;top:166px;width:2px;height:178px;background:#c9c9c9"></div>
<svg style="left:3678px;top:176px;" width="56" height="60" viewBox="0 0 56 60">
<path d="M3 3 H30 Q37 3 37 10 V24 M3 3 V52 H24" fill="none" stroke="#2a6fdb" stroke-width="2.4"/>
<path d="M10 34 Q18 14 19 10 Q20 7 18 8 Q15 12 22 24 Q27 32 33 29 Q30 27 13 33" fill="none" stroke="#2a6fdb" stroke-width="1.6"/>
<path d="M31 34 L36 29 Q40 25 44 29 Q48 33 44 37 L39 42 M36 44 L31 49 Q27 53 23 49 Q19 45 23 41 L28 36 M31 43 L40 34" fill="none" stroke="#2a6fdb" stroke-width="2.4"/>
</svg>
<span class="t" style="top:244.65px;font-size:22.5px;line-height:22.5px;color:#242424;left:3664.6px;transform-origin:0 0;transform:scaleX(0.9919);">Create</span>
<span class="t" style="top:277.25px;font-size:22.5px;line-height:22.5px;color:#242424;left:3668.3px;transform-origin:0 0;transform:scaleX(0.9362);">a PDF</span>
<span class="t" style="top:326.19px;font-size:19.5px;line-height:19.5px;color:#242424;left:3642.2px;transform-origin:0 0;transform:scaleX(1.0527);">Adobe Acr...</span>
<div style="left:3761.5px;top:166px;width:2px;height:178px;background:#c9c9c9"></div>
<svg style="left:3783px;top:321px;" width="24" height="15" viewBox="0 0 24 15"><path d="M2 2 L12 12 L22 2" fill="none" stroke="#333" stroke-width="2.2"/></svg>
<div style="left:17px;top:372.5px;width:200px;height:43px;background:#fff;border:1px solid #d4d6d8;border-radius:8px;box-sizing:border-box"></div>
<span class="t" style="top:383.11px;font-size:23.5px;line-height:23.5px;color:#1a1a1a;left:23.7px;transform-origin:0 0;transform:scaleX(0.9419);">C8</span>
<svg style="left:186px;top:387px;" width="24" height="16" viewBox="0 0 24 16"><path d="M2 2.5 L12 12.5 L22 2.5" fill="none" stroke="#333" stroke-width="2"/></svg>
<svg style="left:234px;top:383px;" width="8" height="23" viewBox="0 0 8 23"><rect x="1" y="1" width="5" height="5" fill="#333"/><rect x="1" y="9" width="5" height="5" fill="#333"/><rect x="1" y="17" width="5" height="5" fill="#333"/></svg>
<div style="left:258.5px;top:372.5px;width:145px;height:43px;background:#fff;border:1px solid #d4d6d8;border-radius:8px;box-sizing:border-box"></div>
<svg style="left:269px;top:380px;" width="28" height="22" viewBox="0 0 28 22"><path d="M3 2 L25 20 M25 2 L3 20" stroke="#b5b5b5" stroke-width="2"/></svg>
<svg style="left:313px;top:380px;" width="36" height="22" viewBox="0 0 36 22"><path d="M2 12 L12 20 L34 2" fill="none" stroke="#b5b5b5" stroke-width="2"/></svg>
<span class="t" style="top:376.61px;font-size:30px;line-height:30px;color:#333;font-style:italic;left:363px;transform-origin:0 0;transform:scaleX(1.2423);font-family:"Liberation Serif",serif;">fx</span>
<div style="left:412.5px;top:372.5px;width:3411px;height:43px;background:#fff;border:1px solid #d4d6d8;border-radius:8px;box-sizing:border-box"></div>
<span class="t" style="top:383.11px;font-size:23.5px;line-height:23.5px;color:#1a1a1a;left:435.5px;transform-origin:0 0;transform:scaleX(1.0613);">Fakeram</span>
<svg style="left:3792px;top:384px;" width="26" height="17" viewBox="0 0 26 17"><path d="M2 2.5 L13 13.5 L24 2.5" fill="none" stroke="#333" stroke-width="2"/></svg>
<div style="left:0px;top:430px;width:3801px;height:1526px;background:#fff"></div>
<div style="left:0px;top:430px;width:3801px;height:37.5px;background:#e1e1e1"></div>
<div style="left:0px;top:466.5px;width:3801px;height:1px;background:#c6c6c6"></div>
<div style="left:0px;top:430px;width:53px;height:37.0px;background:#f3f3f3"></div>
<svg style="left:18px;top:433px;" width="34" height="33" viewBox="0 0 34 33"><path d="M31.7 1.7 V30.7 H3.1 Z" fill="#dfdfdf"/></svg>
<div style="left:277.8px;top:430px;width:1px;height:37.5px;background:#c8c8c8"></div>
<span class="t" style="top:437.37px;font-size:26.5px;line-height:26.5px;color:#107238;left:165.9px;transform-origin:50% 0;transform:translateX(-50%);">A</span>
<div style="left:517.7px;top:430px;width:1px;height:37.5px;background:#c8c8c8"></div>
<span class="t" style="top:437.37px;font-size:26.5px;line-height:26.5px;color:#107238;left:398.25px;transform-origin:50% 0;transform:translateX(-50%);">B</span>
<div style="left:718.0px;top:430px;width:1px;height:37.5px;background:#c8c8c8"></div>
<span class="t" style="top:437.37px;font-size:26.5px;line-height:26.5px;color:#107238;left:618.35px;transform-origin:50% 0;transform:translateX(-50%);">C</span>
<div style="left:1060.8px;top:430px;width:1px;height:37.5px;background:#c8c8c8"></div>
<span class="t" style="top:437.37px;font-size:26.5px;line-height:26.5px;color:#107238;left:889.9px;transform-origin:50% 0;transform:translateX(-50%);">D</span>
<div style="left:1237.9px;top:430px;width:1px;height:37.5px;background:#c8c8c8"></div>
<span class="t" style="top:437.37px;font-size:26.5px;line-height:26.5px;color:#107238;left:1149.85px;transform-origin:50% 0;transform:translateX(-50%);">E</span>
<div style="left:1667.0px;top:430px;width:1px;height:37.5px;background:#c8c8c8"></div>
<span class="t" style="top:437.37px;font-size:26.5px;line-height:26.5px;color:#107238;left:1452.95px;transform-origin:50% 0;transform:translateX(-50%);">F</span>
<div style="left:1876.5px;top:430px;width:1px;height:37.5px;background:#c8c8c8"></div>
<span class="t" style="top:437.37px;font-size:26.5px;line-height:26.5px;color:#107238;left:1772.25px;transform-origin:50% 0;transform:translateX(-50%);">G</span>
<div style="left:2088.0px;top:430px;width:1px;height:37.5px;background:#c8c8c8"></div>
<span class="t" style="top:437.37px;font-size:26.5px;line-height:26.5px;color:#107238;left:1982.75px;transform-origin:50% 0;transform:translateX(-50%);">H</span>
<div style="left:3800.2px;top:430px;width:1px;height:37.5px;background:#c8c8c8"></div>
<div style="left:518.2px;top:464.5px;width:200.29999999999995px;height:3.5px;background:#107238"></div>
<div style="left:0px;top:467.5px;width:53.5px;height:1488.5px;background:#e1e1e1"></div>
<div style="left:52.5px;top:430px;width:1px;height:1526px;background:#c6c6c6"></div>
<div style="left:53.5px;top:467.5px;width:3747.2px;height:38.0px;background:#4472c4"></div>
<span class="t" style="top:475.07px;font-size:26.5px;line-height:26.5px;color:#107238;left:26.5px;transform-origin:50% 0;transform:translateX(-50%);">1</span>
<div style="left:0px;top:505.0px;width:53px;height:1px;background:#c8c8c8"></div>
<span class="t" style="top:474.99px;font-size:26px;line-height:26px;color:#fff;font-weight:700;left:58.0px;transform-origin:0 0;transform:scaleX(0.9964);">Time</span>
<span class="t" style="top:474.99px;font-size:26px;line-height:26px;color:#fff;font-weight:700;left:282.8px;transform-origin:0 0;transform:scaleX(0.9708);">Event Sequence</span>
<span class="t" style="top:474.99px;font-size:26px;line-height:26px;color:#fff;font-weight:700;left:522.7px;transform-origin:0 0;transform:scaleX(0.9773);">Database</span>
<span class="t" style="top:474.99px;font-size:26px;line-height:26px;color:#fff;font-weight:700;left:723.0px;transform-origin:0 0;transform:scaleX(0.9843);">Client App</span>
<span class="t" style="top:474.99px;font-size:26px;line-height:26px;color:#fff;font-weight:700;left:1065.8px;transform-origin:0 0;transform:scaleX(0.9691);">Client Host</span>
<span class="t" style="top:474.99px;font-size:26px;line-height:26px;color:#fff;font-weight:700;left:1242.9px;transform-origin:0 0;transform:scaleX(0.9942);">Username</span>
<span class="t" style="top:474.99px;font-size:26px;line-height:26px;color:#fff;font-weight:700;left:1672.0px;transform-origin:0 0;transform:scaleX(0.9652);">Error Severity</span>
<span class="t" style="top:474.99px;font-size:26px;line-height:26px;color:#fff;font-weight:700;left:1881.5px;transform-origin:0 0;transform:scaleX(0.9879);">Error Number</span>
<span class="t" style="top:474.99px;font-size:26px;line-height:26px;color:#fff;font-weight:700;left:2093.0px;transform-origin:0 0;transform:scaleX(0.9632);">Error Message</span>
<div style="left:244.3px;top:470px;width:33.5px;height:33.5px;background:#fff;border:1.5px solid #d9d9d9;box-sizing:border-box"></div>
<svg style="left:254.3px;top:483px;" width="14" height="9" viewBox="0 0 14 9"><path d="M0.5 0.5 H13.5 L7 8 Z" fill="#7a7a7a"/></svg>
<div style="left:484.20000000000005px;top:470px;width:33.5px;height:33.5px;background:#fff;border:1.5px solid #d9d9d9;box-sizing:border-box"></div>
<svg style="left:494.20000000000005px;top:483px;" width="14" height="9" viewBox="0 0 14 9"><path d="M0.5 0.5 H13.5 L7 8 Z" fill="#7a7a7a"/></svg>
<div style="left:684.5px;top:470px;width:33.5px;height:33.5px;background:#fff;border:1.5px solid #d9d9d9;box-sizing:border-box"></div>
<svg style="left:694.5px;top:483px;" width="14" height="9" viewBox="0 0 14 9"><path d="M0.5 0.5 H13.5 L7 8 Z" fill="#7a7a7a"/></svg>
<div style="left:1027.3px;top:470px;width:33.5px;height:33.5px;background:#fff;border:1.5px solid #d9d9d9;box-sizing:border-box"></div>
<svg style="left:1030.3px;top:474px;" width="28" height="26" viewBox="0 0 28 26"><path d="M8 6 H26 L19 14 V22 H15 V14 Z" fill="#707070"/><path d="M3 17 H13 L8 22 Z" fill="#707070"/></svg>
<div style="left:1204.4px;top:470px;width:33.5px;height:33.5px;background:#fff;border:1.5px solid #d9d9d9;box-sizing:border-box"></div>
<svg style="left:1214.4px;top:483px;" width="14" height="9" viewBox="0 0 14 9"><path d="M0.5 0.5 H13.5 L7 8 Z" fill="#7a7a7a"/></svg>
<div style="left:1633.5px;top:470px;width:33.5px;height:33.5px;background:#fff;border:1.5px solid #d9d9d9;box-sizing:border-box"></div>
<svg style="left:1643.5px;top:483px;" width="14" height="9" viewBox="0 0 14 9"><path d="M0.5 0.5 H13.5 L7 8 Z" fill="#7a7a7a"/></svg>
<div style="left:1843px;top:470px;width:33.5px;height:33.5px;background:#fff;border:1.5px solid #d9d9d9;box-sizing:border-box"></div>
<svg style="left:1853px;top:483px;" width="14" height="9" viewBox="0 0 14 9"><path d="M0.5 0.5 H13.5 L7 8 Z" fill="#7a7a7a"/></svg>
<div style="left:2054.5px;top:470px;width:33.5px;height:33.5px;background:#fff;border:1.5px solid #d9d9d9;box-sizing:border-box"></div>
<svg style="left:2064.5px;top:483px;" width="14" height="9" viewBox="0 0 14 9"><path d="M0.5 0.5 H13.5 L7 8 Z" fill="#7a7a7a"/></svg>
<div style="left:277.8px;top:505.5px;width:1px;height:1450.5px;background:#d9d9d9"></div>
<div style="left:517.7px;top:505.5px;width:1px;height:1450.5px;background:#d9d9d9"></div>
<div style="left:718.0px;top:505.5px;width:1px;height:1450.5px;background:#d9d9d9"></div>
<div style="left:1060.8px;top:505.5px;width:1px;height:1450.5px;background:#d9d9d9"></div>
<div style="left:1237.9px;top:505.5px;width:1px;height:1450.5px;background:#d9d9d9"></div>
<div style="left:1667.0px;top:505.5px;width:1px;height:1450.5px;background:#d9d9d9"></div>
<div style="left:1876.5px;top:505.5px;width:1px;height:1450.5px;background:#d9d9d9"></div>
<div style="left:2088.0px;top:505.5px;width:1px;height:1450.5px;background:#d9d9d9"></div>
<span class="t" style="top:512.79px;font-size:26px;line-height:26px;color:#0000ff;left:26.5px;transform-origin:50% 0;transform:translateX(-50%) scaleX(1.0367);">2</span>
<div style="left:0px;top:541.0px;width:53px;height:1px;background:#b8b8b8"></div>
<div style="left:0px;top:545.0px;width:53px;height:1px;background:#b8b8b8"></div>
<div style="left:53.5px;top:543.0px;width:3747.2px;height:1px;background:#4472c4"></div>
<span class="t" style="top:512.79px;font-size:26px;line-height:26px;color:#000;left:60.5px;transform-origin:0 0;transform:scaleX(1.0375);">30-01-2026 18:08</span>
<span class="t" style="top:512.79px;font-size:26px;line-height:26px;color:#000;right:3326.8px;transform-origin:100% 0;transform:scaleX(1.0372);">36140</span>
<span class="t" style="top:512.79px;font-size:26px;line-height:26px;color:#000;left:523.2px;transform-origin:0 0;transform:scaleX(0.9960);">ReportServer</span>
<span class="t" style="top:512.79px;font-size:26px;line-height:26px;color:#000;left:722.5px;transform-origin:0 0;transform:scaleX(0.9948);">Report Server</span>
<span class="t" style="top:512.79px;font-size:26px;line-height:26px;color:#000;left:1065.8px;transform-origin:0 0;transform:scaleX(0.9254);">ITSVR225</span>
<span class="t" style="top:512.79px;font-size:26px;line-height:26px;color:#000;left:1242.9px;transform-origin:0 0;transform:scaleX(0.9175);">NT AUTHORITY\NETWORK SERVICE</span>
<span class="t" style="top:512.79px;font-size:26px;line-height:26px;color:#000;right:1968px;transform-origin:100% 0;transform:scaleX(1.0373);">16</span>
<span class="t" style="top:512.79px;font-size:26px;line-height:26px;color:#000;right:1756.5px;transform-origin:100% 0;transform:scaleX(1.0372);">50000</span>
<span class="t" style="top:512.79px;font-size:26px;line-height:26px;color:#000;left:2093.0px;transform-origin:0 0;transform:scaleX(1.0117);">Invalid or Expired Session: hsu1b345qab4wfjzcrmzw245</span>
<span class="t" style="top:550.79px;font-size:26px;line-height:26px;color:#0000ff;left:26.5px;transform-origin:50% 0;transform:translateX(-50%) scaleX(1.0367);">7</span>
<div style="left:0px;top:581.0px;width:53px;height:1px;background:#c8c8c8"></div>
<div style="left:53.5px;top:581.0px;width:3747.2px;height:1px;background:#4472c4"></div>
<span class="t" style="top:550.79px;font-size:26px;line-height:26px;color:#000;left:60.5px;transform-origin:0 0;transform:scaleX(1.0375);">31-01-2026 06:38</span>
<span class="t" style="top:550.79px;font-size:26px;line-height:26px;color:#000;right:3326.8px;transform-origin:100% 0;transform:scaleX(1.0372);">36148</span>
<span class="t" style="top:550.79px;font-size:26px;line-height:26px;color:#000;left:523.2px;transform-origin:0 0;transform:scaleX(0.9960);">ReportServer</span>
<span class="t" style="top:550.79px;font-size:26px;line-height:26px;color:#000;left:722.5px;transform-origin:0 0;transform:scaleX(0.9948);">Report Server</span>
<span class="t" style="top:550.79px;font-size:26px;line-height:26px;color:#000;left:1065.8px;transform-origin:0 0;transform:scaleX(0.9254);">ITSVR225</span>
<span class="t" style="top:550.79px;font-size:26px;line-height:26px;color:#000;left:1242.9px;transform-origin:0 0;transform:scaleX(0.9175);">NT AUTHORITY\NETWORK SERVICE</span>
<span class="t" style="top:550.79px;font-size:26px;line-height:26px;color:#000;right:1968px;transform-origin:100% 0;transform:scaleX(1.0373);">16</span>
<span class="t" style="top:550.79px;font-size:26px;line-height:26px;color:#000;right:1756.5px;transform-origin:100% 0;transform:scaleX(1.0372);">50000</span>
<span class="t" style="top:550.79px;font-size:26px;line-height:26px;color:#000;left:2093.0px;transform-origin:0 0;transform:scaleX(1.0058);">Expired Session: euf0zx2a0olib0b2wpdmseb3</span>
<span class="t" style="top:588.79px;font-size:26px;line-height:26px;color:#0000ff;left:26.5px;transform-origin:50% 0;transform:translateX(-50%) scaleX(1.0367);">8</span>
<div style="left:0px;top:619.0px;width:53px;height:1px;background:#c8c8c8"></div>
<div style="left:53.5px;top:619.0px;width:3747.2px;height:1px;background:#4472c4"></div>
<span class="t" style="top:588.79px;font-size:26px;line-height:26px;color:#000;left:60.5px;transform-origin:0 0;transform:scaleX(1.0375);">31-01-2026 16:00</span>
<span class="t" style="top:588.79px;font-size:26px;line-height:26px;color:#000;right:3326.8px;transform-origin:100% 0;transform:scaleX(1.0372);">36149</span>
<span class="t" style="top:588.79px;font-size:26px;line-height:26px;color:#000;left:523.2px;transform-origin:0 0;transform:scaleX(0.9846);">Fakeram</span>
<span class="t" style="top:588.79px;font-size:26px;line-height:26px;color:#000;left:722.5px;transform-origin:0 0;transform:scaleX(1.0119);">.Net SqlClient Data Provider</span>
<span class="t" style="top:588.79px;font-size:26px;line-height:26px;color:#000;left:1065.8px;transform-origin:0 0;transform:scaleX(0.9254);">ITSVR227</span>
<span class="t" style="top:588.79px;font-size:26px;line-height:26px;color:#000;left:1242.9px;transform-origin:0 0;transform:scaleX(1.0476);">innovator_regular</span>
<span class="t" style="top:588.79px;font-size:26px;line-height:26px;color:#000;right:1968px;transform-origin:100% 0;transform:scaleX(1.0373);">16</span>
<span class="t" style="top:588.79px;font-size:26px;line-height:26px;color:#000;right:1756.5px;transform-origin:100% 0;transform:scaleX(1.0371);">208</span>
<span class="t" style="top:588.79px;font-size:26px;line-height:26px;color:#000;left:2093.0px;transform-origin:0 0;transform:scaleX(0.9408);">Invalid object name 'CLOSEPROJECTWITHOPENBOMBYTASK'.</span>
<span class="t" style="top:626.79px;font-size:26px;line-height:26px;color:#0000ff;left:26.5px;transform-origin:50% 0;transform:translateX(-50%) scaleX(1.0367);">9</span>
<div style="left:0px;top:657.0px;width:53px;height:1px;background:#c8c8c8"></div>
<div style="left:53.5px;top:657.0px;width:3747.2px;height:1px;background:#4472c4"></div>
<span class="t" style="top:626.79px;font-size:26px;line-height:26px;color:#000;left:60.5px;transform-origin:0 0;transform:scaleX(1.0375);">31-01-2026 16:21</span>
<span class="t" style="top:626.79px;font-size:26px;line-height:26px;color:#000;right:3326.8px;transform-origin:100% 0;transform:scaleX(1.0372);">36150</span>
<span class="t" style="top:626.79px;font-size:26px;line-height:26px;color:#000;left:523.2px;transform-origin:0 0;transform:scaleX(0.9846);">Fakeram</span>
<span class="t" style="top:626.79px;font-size:26px;line-height:26px;color:#000;left:722.5px;transform-origin:0 0;transform:scaleX(0.8981);">SQLServerCEIP</span>
<span class="t" style="top:626.79px;font-size:26px;line-height:26px;color:#000;left:1065.8px;transform-origin:0 0;transform:scaleX(0.9254);">ITSVR225</span>
<span class="t" style="top:626.79px;font-size:26px;line-height:26px;color:#000;left:1242.9px;transform-origin:0 0;transform:scaleX(0.8914);">NT SERVICE\SQLTELEMETRY</span>
<span class="t" style="top:626.79px;font-size:26px;line-height:26px;color:#000;right:1968px;transform-origin:100% 0;transform:scaleX(1.0373);">16</span>
<span class="t" style="top:626.79px;font-size:26px;line-height:26px;color:#000;right:1756.5px;transform-origin:100% 0;transform:scaleX(1.0373);">8622</span>
<span class="t" style="top:626.79px;font-size:26px;line-height:26px;color:#000;left:2093.0px;transform-origin:0 0;transform:scaleX(1.0300);">Query processor could not produce a query plan because of the hints defined in this query. Resubmit the query without specifying any hints and witho</span>
<span class="t" style="top:664.79px;font-size:26px;line-height:26px;color:#0000ff;left:26.5px;transform-origin:50% 0;transform:translateX(-50%) scaleX(1.0373);">10</span>
<div style="left:0px;top:693.0px;width:53px;height:1px;background:#b8b8b8"></div>
<div style="left:0px;top:697.0px;width:53px;height:1px;background:#b8b8b8"></div>
<div style="left:53.5px;top:695.0px;width:3747.2px;height:1px;background:#4472c4"></div>
<span class="t" style="top:664.79px;font-size:26px;line-height:26px;color:#000;left:60.5px;transform-origin:0 0;transform:scaleX(1.0375);">31-01-2026 16:21</span>
<span class="t" style="top:664.79px;font-size:26px;line-height:26px;color:#000;right:3326.8px;transform-origin:100% 0;transform:scaleX(1.0372);">36151</span>
<span class="t" style="top:664.79px;font-size:26px;line-height:26px;color:#000;left:523.2px;transform-origin:0 0;transform:scaleX(0.9846);">Fakeram</span>
<span class="t" style="top:664.79px;font-size:26px;line-height:26px;color:#000;left:722.5px;transform-origin:0 0;transform:scaleX(0.8981);">SQLServerCEIP</span>
<span class="t" style="top:664.79px;font-size:26px;line-height:26px;color:#000;left:1065.8px;transform-origin:0 0;transform:scaleX(0.9254);">ITSVR225</span>
<span class="t" style="top:664.79px;font-size:26px;line-height:26px;color:#000;left:1242.9px;transform-origin:0 0;transform:scaleX(0.8914);">NT SERVICE\SQLTELEMETRY</span>
<span class="t" style="top:664.79px;font-size:26px;line-height:26px;color:#000;right:1968px;transform-origin:100% 0;transform:scaleX(1.0373);">16</span>
<span class="t" style="top:664.79px;font-size:26px;line-height:26px;color:#000;right:1756.5px;transform-origin:100% 0;transform:scaleX(1.0373);">8622</span>
<span class="t" style="top:664.79px;font-size:26px;line-height:26px;color:#000;left:2093.0px;transform-origin:0 0;transform:scaleX(1.0300);">Query processor could not produce a query plan because of the hints defined in this query. Resubmit the query without specifying any hints and witho</span>
<span class="t" style="top:702.79px;font-size:26px;line-height:26px;color:#0000ff;left:26.5px;transform-origin:50% 0;transform:translateX(-50%) scaleX(1.0373);">16</span>
<div style="left:0px;top:733.0px;width:53px;height:1px;background:#c8c8c8"></div>
<div style="left:53.5px;top:733.0px;width:3747.2px;height:1px;background:#4472c4"></div>
<span class="t" style="top:702.79px;font-size:26px;line-height:26px;color:#000;left:60.5px;transform-origin:0 0;transform:scaleX(1.0375);">01-02-2026 03:38</span>
<span class="t" style="top:702.79px;font-size:26px;line-height:26px;color:#000;right:3326.8px;transform-origin:100% 0;transform:scaleX(1.0372);">36158</span>
<span class="t" style="top:702.79px;font-size:26px;line-height:26px;color:#000;left:523.2px;transform-origin:0 0;transform:scaleX(0.9846);">Fakeram</span>
<span class="t" style="top:702.79px;font-size:26px;line-height:26px;color:#000;left:722.5px;transform-origin:0 0;transform:scaleX(1.0119);">.Net SqlClient Data Provider</span>
<span class="t" style="top:702.79px;font-size:26px;line-height:26px;color:#000;left:1065.8px;transform-origin:0 0;transform:scaleX(0.9254);">ITSVR227</span>
<span class="t" style="top:702.79px;font-size:26px;line-height:26px;color:#000;left:1242.9px;transform-origin:0 0;transform:scaleX(1.0476);">innovator_regular</span>
<span class="t" style="top:702.79px;font-size:26px;line-height:26px;color:#000;right:1968px;transform-origin:100% 0;transform:scaleX(1.0373);">16</span>
<span class="t" style="top:702.79px;font-size:26px;line-height:26px;color:#000;right:1756.5px;transform-origin:100% 0;transform:scaleX(1.0373);">9104</span>
<span class="t" style="top:702.79px;font-size:26px;line-height:26px;color:#000;left:2093.0px;transform-origin:0 0;transform:scaleX(1.0519);">auto statistics internal</span>
<span class="t" style="top:740.79px;font-size:26px;line-height:26px;color:#0000ff;left:26.5px;transform-origin:50% 0;transform:translateX(-50%) scaleX(1.0373);">17</span>
<div style="left:0px;top:771.0px;width:53px;height:1px;background:#c8c8c8"></div>
<div style="left:53.5px;top:771.0px;width:3747.2px;height:1px;background:#4472c4"></div>
<span class="t" style="top:740.79px;font-size:26px;line-height:26px;color:#000;left:60.5px;transform-origin:0 0;transform:scaleX(1.0375);">01-02-2026 10:05</span>
<span class="t" style="top:740.79px;font-size:26px;line-height:26px;color:#000;right:3326.8px;transform-origin:100% 0;transform:scaleX(1.0372);">36160</span>
<span class="t" style="top:740.79px;font-size:26px;line-height:26px;color:#000;left:523.2px;transform-origin:0 0;transform:scaleX(0.9846);">Fakeram</span>
<span class="t" style="top:740.79px;font-size:26px;line-height:26px;color:#000;left:722.5px;transform-origin:0 0;transform:scaleX(1.0119);">.Net SqlClient Data Provider</span>
<span class="t" style="top:740.79px;font-size:26px;line-height:26px;color:#000;left:1065.8px;transform-origin:0 0;transform:scaleX(0.9254);">ITSVR224</span>
<span class="t" style="top:740.79px;font-size:26px;line-height:26px;color:#000;left:1242.9px;transform-origin:0 0;transform:scaleX(1.0476);">innovator_regular</span>
<span class="t" style="top:740.79px;font-size:26px;line-height:26px;color:#000;right:1968px;transform-origin:100% 0;transform:scaleX(1.0373);">16</span>
<span class="t" style="top:740.79px;font-size:26px;line-height:26px;color:#000;right:1756.5px;transform-origin:100% 0;transform:scaleX(1.0373);">9104</span>
<span class="t" style="top:740.79px;font-size:26px;line-height:26px;color:#000;left:2093.0px;transform-origin:0 0;transform:scaleX(1.0519);">auto statistics internal</span>
<span class="t" style="top:778.79px;font-size:26px;line-height:26px;color:#0000ff;left:26.5px;transform-origin:50% 0;transform:translateX(-50%) scaleX(1.0373);">18</span>
<div style="left:0px;top:809.0px;width:53px;height:1px;background:#c8c8c8"></div>
<div style="left:53.5px;top:809.0px;width:3747.2px;height:1px;background:#4472c4"></div>
<span class="t" style="top:778.79px;font-size:26px;line-height:26px;color:#000;left:60.5px;transform-origin:0 0;transform:scaleX(1.0375);">02-02-2026 10:09</span>
<span class="t" style="top:778.79px;font-size:26px;line-height:26px;color:#000;right:3326.8px;transform-origin:100% 0;transform:scaleX(1.0372);">36287</span>
<span class="t" style="top:778.79px;font-size:26px;line-height:26px;color:#000;left:523.2px;transform-origin:0 0;transform:scaleX(0.9846);">Fakeram</span>
<span class="t" style="top:778.79px;font-size:26px;line-height:26px;color:#000;left:722.5px;transform-origin:0 0;transform:scaleX(1.0119);">.Net SqlClient Data Provider</span>
<span class="t" style="top:778.79px;font-size:26px;line-height:26px;color:#000;left:1065.8px;transform-origin:0 0;transform:scaleX(0.9254);">ITSVR227</span>
<span class="t" style="top:778.79px;font-size:26px;line-height:26px;color:#000;left:1242.9px;transform-origin:0 0;transform:scaleX(1.0476);">innovator_regular</span>
<span class="t" style="top:778.79px;font-size:26px;line-height:26px;color:#000;right:1968px;transform-origin:100% 0;transform:scaleX(1.0373);">16</span>
<span class="t" style="top:778.79px;font-size:26px;line-height:26px;color:#000;right:1756.5px;transform-origin:100% 0;transform:scaleX(1.0373);">9104</span>
<span class="t" style="top:778.79px;font-size:26px;line-height:26px;color:#000;left:2093.0px;transform-origin:0 0;transform:scaleX(1.0519);">auto statistics internal</span>
<span class="t" style="top:816.79px;font-size:26px;line-height:26px;color:#0000ff;left:26.5px;transform-origin:50% 0;transform:translateX(-50%) scaleX(1.0373);">19</span>
<div style="left:0px;top:847.0px;width:53px;height:1px;background:#c8c8c8"></div>
<div style="left:53.5px;top:847.0px;width:3747.2px;height:1px;background:#4472c4"></div>
<span class="t" style="top:816.79px;font-size:26px;line-height:26px;color:#000;left:60.5px;transform-origin:0 0;transform:scaleX(1.0375);">02-02-2026 10:10</span>
<span class="t" style="top:816.79px;font-size:26px;line-height:26px;color:#000;right:3326.8px;transform-origin:100% 0;transform:scaleX(1.0372);">36288</span>
<span class="t" style="top:816.79px;font-size:26px;line-height:26px;color:#000;left:523.2px;transform-origin:0 0;transform:scaleX(0.9846);">Fakeram</span>
<span class="t" style="top:816.79px;font-size:26px;line-height:26px;color:#000;left:722.5px;transform-origin:0 0;transform:scaleX(1.0119);">.Net SqlClient Data Provider</span>
<span class="t" style="top:816.79px;font-size:26px;line-height:26px;color:#000;left:1065.8px;transform-origin:0 0;transform:scaleX(0.9254);">ITSVR227</span>
<span class="t" style="top:816.79px;font-size:26px;line-height:26px;color:#000;left:1242.9px;transform-origin:0 0;transform:scaleX(1.0476);">innovator_regular</span>
<span class="t" style="top:816.79px;font-size:26px;line-height:26px;color:#000;right:1968px;transform-origin:100% 0;transform:scaleX(1.0373);">16</span>
<span class="t" style="top:816.79px;font-size:26px;line-height:26px;color:#000;right:1756.5px;transform-origin:100% 0;transform:scaleX(1.0373);">9104</span>
<span class="t" style="top:816.79px;font-size:26px;line-height:26px;color:#000;left:2093.0px;transform-origin:0 0;transform:scaleX(1.0519);">auto statistics internal</span>
<span class="t" style="top:854.79px;font-size:26px;line-height:26px;color:#0000ff;left:26.5px;transform-origin:50% 0;transform:translateX(-50%) scaleX(1.0373);">20</span>
<div style="left:0px;top:885.0px;width:53px;height:1px;background:#c8c8c8"></div>
<div style="left:53.5px;top:885.0px;width:3747.2px;height:1px;background:#4472c4"></div>
<span class="t" style="top:854.79px;font-size:26px;line-height:26px;color:#000;left:60.5px;transform-origin:0 0;transform:scaleX(1.0375);">02-02-2026 12:09</span>
<span class="t" style="top:854.79px;font-size:26px;line-height:26px;color:#000;right:3326.8px;transform-origin:100% 0;transform:scaleX(1.0372);">36289</span>
<span class="t" style="top:854.79px;font-size:26px;line-height:26px;color:#000;left:523.2px;transform-origin:0 0;transform:scaleX(0.9846);">Fakeram</span>
<span class="t" style="top:854.79px;font-size:26px;line-height:26px;color:#000;left:722.5px;transform-origin:0 0;transform:scaleX(1.0119);">.Net SqlClient Data Provider</span>
<span class="t" style="top:854.79px;font-size:26px;line-height:26px;color:#000;left:1065.8px;transform-origin:0 0;transform:scaleX(0.9254);">ITSVR224</span>
<span class="t" style="top:854.79px;font-size:26px;line-height:26px;color:#000;left:1242.9px;transform-origin:0 0;transform:scaleX(1.0476);">innovator_regular</span>
<span class="t" style="top:854.79px;font-size:26px;line-height:26px;color:#000;right:1968px;transform-origin:100% 0;transform:scaleX(1.0373);">16</span>
<span class="t" style="top:854.79px;font-size:26px;line-height:26px;color:#000;right:1756.5px;transform-origin:100% 0;transform:scaleX(1.0373);">9104</span>
<span class="t" style="top:854.79px;font-size:26px;line-height:26px;color:#000;left:2093.0px;transform-origin:0 0;transform:scaleX(1.0519);">auto statistics internal</span>
<span class="t" style="top:892.79px;font-size:26px;line-height:26px;color:#0000ff;left:26.5px;transform-origin:50% 0;transform:translateX(-50%) scaleX(1.0373);">21</span>
<div style="left:0px;top:923.0px;width:53px;height:1px;background:#c8c8c8"></div>
<div style="left:53.5px;top:923.0px;width:3747.2px;height:1px;background:#4472c4"></div>
<span class="t" style="top:892.79px;font-size:26px;line-height:26px;color:#000;left:60.5px;transform-origin:0 0;transform:scaleX(1.0375);">02-02-2026 12:35</span>
<span class="t" style="top:892.79px;font-size:26px;line-height:26px;color:#000;right:3326.8px;transform-origin:100% 0;transform:scaleX(1.0372);">36290</span>
<span class="t" style="top:892.79px;font-size:26px;line-height:26px;color:#000;left:523.2px;transform-origin:0 0;transform:scaleX(0.9960);">ReportServer</span>
<span class="t" style="top:892.79px;font-size:26px;line-height:26px;color:#000;left:722.5px;transform-origin:0 0;transform:scaleX(0.9948);">Report Server</span>
<span class="t" style="top:892.79px;font-size:26px;line-height:26px;color:#000;left:1065.8px;transform-origin:0 0;transform:scaleX(0.9254);">ITSVR225</span>
<span class="t" style="top:892.79px;font-size:26px;line-height:26px;color:#000;left:1242.9px;transform-origin:0 0;transform:scaleX(0.9175);">NT AUTHORITY\NETWORK SERVICE</span>
<span class="t" style="top:892.79px;font-size:26px;line-height:26px;color:#000;right:1968px;transform-origin:100% 0;transform:scaleX(1.0373);">16</span>
<span class="t" style="top:892.79px;font-size:26px;line-height:26px;color:#000;right:1756.5px;transform-origin:100% 0;transform:scaleX(1.0372);">50000</span>
<span class="t" style="top:892.79px;font-size:26px;line-height:26px;color:#000;left:2093.0px;transform-origin:0 0;transform:scaleX(1.0057);">Expired Session: m2f0zj2y52reme45uymsuk45</span>
<span class="t" style="top:930.79px;font-size:26px;line-height:26px;color:#0000ff;left:26.5px;transform-origin:50% 0;transform:translateX(-50%) scaleX(1.0373);">22</span>
<div style="left:0px;top:961.0px;width:53px;height:1px;background:#c8c8c8"></div>
<div style="left:53.5px;top:961.0px;width:3747.2px;height:1px;background:#4472c4"></div>
<span class="t" style="top:930.79px;font-size:26px;line-height:26px;color:#000;left:60.5px;transform-origin:0 0;transform:scaleX(1.0375);">02-02-2026 13:26</span>
<span class="t" style="top:930.79px;font-size:26px;line-height:26px;color:#000;right:3326.8px;transform-origin:100% 0;transform:scaleX(1.0372);">36291</span>
<span class="t" style="top:930.79px;font-size:26px;line-height:26px;color:#000;left:523.2px;transform-origin:0 0;transform:scaleX(0.9960);">ReportServer</span>
<span class="t" style="top:930.79px;font-size:26px;line-height:26px;color:#000;left:722.5px;transform-origin:0 0;transform:scaleX(0.9948);">Report Server</span>
<span class="t" style="top:930.79px;font-size:26px;line-height:26px;color:#000;left:1065.8px;transform-origin:0 0;transform:scaleX(0.9254);">ITSVR225</span>
<span class="t" style="top:930.79px;font-size:26px;line-height:26px;color:#000;left:1242.9px;transform-origin:0 0;transform:scaleX(0.9175);">NT AUTHORITY\NETWORK SERVICE</span>
<span class="t" style="top:930.79px;font-size:26px;line-height:26px;color:#000;right:1968px;transform-origin:100% 0;transform:scaleX(1.0373);">16</span>
<span class="t" style="top:930.79px;font-size:26px;line-height:26px;color:#000;right:1756.5px;transform-origin:100% 0;transform:scaleX(1.0372);">50000</span>
<span class="t" style="top:930.79px;font-size:26px;line-height:26px;color:#000;left:2093.0px;transform-origin:0 0;transform:scaleX(1.0149);">Invalid or Expired Session: oy1y2045sfrk4245vnvxd5nt</span>
<span class="t" style="top:968.79px;font-size:26px;line-height:26px;color:#0000ff;left:26.5px;transform-origin:50% 0;transform:translateX(-50%) scaleX(1.0373);">23</span>
<div style="left:0px;top:999.0px;width:53px;height:1px;background:#c8c8c8"></div>
<div style="left:53.5px;top:999.0px;width:3747.2px;height:1px;background:#4472c4"></div>
<span class="t" style="top:968.79px;font-size:26px;line-height:26px;color:#000;left:60.5px;transform-origin:0 0;transform:scaleX(1.0375);">02-02-2026 13:41</span>
<span class="t" style="top:968.79px;font-size:26px;line-height:26px;color:#000;right:3326.8px;transform-origin:100% 0;transform:scaleX(1.0372);">36292</span>
<span class="t" style="top:968.79px;font-size:26px;line-height:26px;color:#000;left:523.2px;transform-origin:0 0;transform:scaleX(0.9960);">ReportServer</span>
<span class="t" style="top:968.79px;font-size:26px;line-height:26px;color:#000;left:722.5px;transform-origin:0 0;transform:scaleX(0.9948);">Report Server</span>
<span class="t" style="top:968.79px;font-size:26px;line-height:26px;color:#000;left:1065.8px;transform-origin:0 0;transform:scaleX(0.9254);">ITSVR225</span>
<span class="t" style="top:968.79px;font-size:26px;line-height:26px;color:#000;left:1242.9px;transform-origin:0 0;transform:scaleX(0.9175);">NT AUTHORITY\NETWORK SERVICE</span>
<span class="t" style="top:968.79px;font-size:26px;line-height:26px;color:#000;right:1968px;transform-origin:100% 0;transform:scaleX(1.0373);">16</span>
<span class="t" style="top:968.79px;font-size:26px;line-height:26px;color:#000;right:1756.5px;transform-origin:100% 0;transform:scaleX(1.0372);">50000</span>
<span class="t" style="top:968.79px;font-size:26px;line-height:26px;color:#000;left:2093.0px;transform-origin:0 0;transform:scaleX(1.0111);">Invalid or Expired Session: cl24xh55euy2qeznwvwdd455</span>
<span class="t" style="top:1006.79px;font-size:26px;line-height:26px;color:#0000ff;left:26.5px;transform-origin:50% 0;transform:translateX(-50%) scaleX(1.0373);">24</span>
<div style="left:0px;top:1037.0px;width:53px;height:1px;background:#c8c8c8"></div>
<div style="left:53.5px;top:1037.0px;width:3747.2px;height:1px;background:#4472c4"></div>
<span class="t" style="top:1006.79px;font-size:26px;line-height:26px;color:#000;left:60.5px;transform-origin:0 0;transform:scaleX(1.0375);">02-02-2026 15:53</span>
<span class="t" style="top:1006.79px;font-size:26px;line-height:26px;color:#000;right:3326.8px;transform-origin:100% 0;transform:scaleX(1.0372);">36293</span>
<span class="t" style="top:1006.79px;font-size:26px;line-height:26px;color:#000;left:523.2px;transform-origin:0 0;transform:scaleX(0.9960);">ReportServer</span>
<span class="t" style="top:1006.79px;font-size:26px;line-height:26px;color:#000;left:722.5px;transform-origin:0 0;transform:scaleX(0.9948);">Report Server</span>
<span class="t" style="top:1006.79px;font-size:26px;line-height:26px;color:#000;left:1065.8px;transform-origin:0 0;transform:scaleX(0.9254);">ITSVR225</span>
<span class="t" style="top:1006.79px;font-size:26px;line-height:26px;color:#000;left:1242.9px;transform-origin:0 0;transform:scaleX(0.9175);">NT AUTHORITY\NETWORK SERVICE</span>
<span class="t" style="top:1006.79px;font-size:26px;line-height:26px;color:#000;right:1968px;transform-origin:100% 0;transform:scaleX(1.0373);">16</span>
<span class="t" style="top:1006.79px;font-size:26px;line-height:26px;color:#000;right:1756.5px;transform-origin:100% 0;transform:scaleX(1.0372);">50000</span>
<span class="t" style="top:1006.79px;font-size:26px;line-height:26px;color:#000;left:2093.0px;transform-origin:0 0;transform:scaleX(1.0269);">Invalid or Expired Session: tfuwbmixlwozy155rho15b55</span>
<span class="t" style="top:1044.79px;font-size:26px;line-height:26px;color:#0000ff;left:26.5px;transform-origin:50% 0;transform:translateX(-50%) scaleX(1.0373);">25</span>
<div style="left:0px;top:1075.0px;width:53px;height:1px;background:#c8c8c8"></div>
<div style="left:53.5px;top:1075.0px;width:3747.2px;height:1px;background:#4472c4"></div>
<span class="t" style="top:1044.79px;font-size:26px;line-height:26px;color:#000;left:60.5px;transform-origin:0 0;transform:scaleX(1.0375);">02-02-2026 16:00</span>
<span class="t" style="top:1044.79px;font-size:26px;line-height:26px;color:#000;right:3326.8px;transform-origin:100% 0;transform:scaleX(1.0372);">36294</span>
<span class="t" style="top:1044.79px;font-size:26px;line-height:26px;color:#000;left:523.2px;transform-origin:0 0;transform:scaleX(0.9846);">Fakeram</span>
<span class="t" style="top:1044.79px;font-size:26px;line-height:26px;color:#000;left:722.5px;transform-origin:0 0;transform:scaleX(1.0119);">.Net SqlClient Data Provider</span>
<span class="t" style="top:1044.79px;font-size:26px;line-height:26px;color:#000;left:1065.8px;transform-origin:0 0;transform:scaleX(0.9254);">ITSVR227</span>
<span class="t" style="top:1044.79px;font-size:26px;line-height:26px;color:#000;left:1242.9px;transform-origin:0 0;transform:scaleX(1.0476);">innovator_regular</span>
<span class="t" style="top:1044.79px;font-size:26px;line-height:26px;color:#000;right:1968px;transform-origin:100% 0;transform:scaleX(1.0373);">16</span>
<span class="t" style="top:1044.79px;font-size:26px;line-height:26px;color:#000;right:1756.5px;transform-origin:100% 0;transform:scaleX(1.0371);">208</span>
<span class="t" style="top:1044.79px;font-size:26px;line-height:26px;color:#000;left:2093.0px;transform-origin:0 0;transform:scaleX(0.9408);">Invalid object name 'CLOSEPROJECTWITHOPENBOMBYTASK'.</span>
<span class="t" style="top:1082.79px;font-size:26px;line-height:26px;color:#0000ff;left:26.5px;transform-origin:50% 0;transform:translateX(-50%) scaleX(1.0373);">26</span>
<div style="left:0px;top:1113.0px;width:53px;height:1px;background:#c8c8c8"></div>
<div style="left:53.5px;top:1113.0px;width:3747.2px;height:1px;background:#4472c4"></div>
<span class="t" style="top:1082.79px;font-size:26px;line-height:26px;color:#000;left:60.5px;transform-origin:0 0;transform:scaleX(1.0474);">02-02-2026 16:11</span>
<span class="t" style="top:1082.79px;font-size:26px;line-height:26px;color:#000;right:3326.8px;transform-origin:100% 0;transform:scaleX(1.0372);">36295</span>
<span class="t" style="top:1082.79px;font-size:26px;line-height:26px;color:#000;left:523.2px;transform-origin:0 0;transform:scaleX(0.9846);">Fakeram</span>
<span class="t" style="top:1082.79px;font-size:26px;line-height:26px;color:#000;left:722.5px;transform-origin:0 0;transform:scaleX(1.0119);">.Net SqlClient Data Provider</span>
<span class="t" style="top:1082.79px;font-size:26px;line-height:26px;color:#000;left:1065.8px;transform-origin:0 0;transform:scaleX(0.9254);">ITSVR224</span>
<span class="t" style="top:1082.79px;font-size:26px;line-height:26px;color:#000;left:1242.9px;transform-origin:0 0;transform:scaleX(1.0476);">innovator_regular</span>
<span class="t" style="top:1082.79px;font-size:26px;line-height:26px;color:#000;right:1968px;transform-origin:100% 0;transform:scaleX(1.0373);">16</span>
<span class="t" style="top:1082.79px;font-size:26px;line-height:26px;color:#000;right:1756.5px;transform-origin:100% 0;transform:scaleX(1.0373);">9104</span>
<span class="t" style="top:1082.79px;font-size:26px;line-height:26px;color:#000;left:2093.0px;transform-origin:0 0;transform:scaleX(1.0519);">auto statistics internal</span>
<span class="t" style="top:1120.79px;font-size:26px;line-height:26px;color:#0000ff;left:26.5px;transform-origin:50% 0;transform:translateX(-50%) scaleX(1.0373);">27</span>
<div style="left:0px;top:1151.0px;width:53px;height:1px;background:#c8c8c8"></div>
<div style="left:53.5px;top:1151.0px;width:3747.2px;height:1px;background:#4472c4"></div>
<span class="t" style="top:1120.79px;font-size:26px;line-height:26px;color:#000;left:60.5px;transform-origin:0 0;transform:scaleX(1.0375);">02-02-2026 16:27</span>
<span class="t" style="top:1120.79px;font-size:26px;line-height:26px;color:#000;right:3326.8px;transform-origin:100% 0;transform:scaleX(1.0372);">36296</span>
<span class="t" style="top:1120.79px;font-size:26px;line-height:26px;color:#000;left:523.2px;transform-origin:0 0;transform:scaleX(0.9846);">Fakeram</span>
<span class="t" style="top:1120.79px;font-size:26px;line-height:26px;color:#000;left:722.5px;transform-origin:0 0;transform:scaleX(0.8981);">SQLServerCEIP</span>
<span class="t" style="top:1120.79px;font-size:26px;line-height:26px;color:#000;left:1065.8px;transform-origin:0 0;transform:scaleX(0.9254);">ITSVR225</span>
<span class="t" style="top:1120.79px;font-size:26px;line-height:26px;color:#000;left:1242.9px;transform-origin:0 0;transform:scaleX(0.8914);">NT SERVICE\SQLTELEMETRY</span>
<span class="t" style="top:1120.79px;font-size:26px;line-height:26px;color:#000;right:1968px;transform-origin:100% 0;transform:scaleX(1.0373);">16</span>
<span class="t" style="top:1120.79px;font-size:26px;line-height:26px;color:#000;right:1756.5px;transform-origin:100% 0;transform:scaleX(1.0373);">8622</span>
<span class="t" style="top:1120.79px;font-size:26px;line-height:26px;color:#000;left:2093.0px;transform-origin:0 0;transform:scaleX(1.0300);">Query processor could not produce a query plan because of the hints defined in this query. Resubmit the query without specifying any hints and witho</span>
<span class="t" style="top:1158.79px;font-size:26px;line-height:26px;color:#0000ff;left:26.5px;transform-origin:50% 0;transform:translateX(-50%) scaleX(1.0373);">28</span>
<div style="left:0px;top:1189.0px;width:53px;height:1px;background:#c8c8c8"></div>
<div style="left:53.5px;top:1189.0px;width:3747.2px;height:1px;background:#4472c4"></div>
<span class="t" style="top:1158.79px;font-size:26px;line-height:26px;color:#000;left:60.5px;transform-origin:0 0;transform:scaleX(1.0375);">02-02-2026 16:27</span>
<span class="t" style="top:1158.79px;font-size:26px;line-height:26px;color:#000;right:3326.8px;transform-origin:100% 0;transform:scaleX(1.0372);">36297</span>
<span class="t" style="top:1158.79px;font-size:26px;line-height:26px;color:#000;left:523.2px;transform-origin:0 0;transform:scaleX(0.9846);">Fakeram</span>
<span class="t" style="top:1158.79px;font-size:26px;line-height:26px;color:#000;left:722.5px;transform-origin:0 0;transform:scaleX(0.8981);">SQLServerCEIP</span>
<span class="t" style="top:1158.79px;font-size:26px;line-height:26px;color:#000;left:1065.8px;transform-origin:0 0;transform:scaleX(0.9254);">ITSVR225</span>
<span class="t" style="top:1158.79px;font-size:26px;line-height:26px;color:#000;left:1242.9px;transform-origin:0 0;transform:scaleX(0.8914);">NT SERVICE\SQLTELEMETRY</span>
<span class="t" style="top:1158.79px;font-size:26px;line-height:26px;color:#000;right:1968px;transform-origin:100% 0;transform:scaleX(1.0373);">16</span>
<span class="t" style="top:1158.79px;font-size:26px;line-height:26px;color:#000;right:1756.5px;transform-origin:100% 0;transform:scaleX(1.0373);">8622</span>
<span class="t" style="top:1158.79px;font-size:26px;line-height:26px;color:#000;left:2093.0px;transform-origin:0 0;transform:scaleX(1.0300);">Query processor could not produce a query plan because of the hints defined in this query. Resubmit the query without specifying any hints and witho</span>
<span class="t" style="top:1196.79px;font-size:26px;line-height:26px;color:#0000ff;left:26.5px;transform-origin:50% 0;transform:translateX(-50%) scaleX(1.0373);">29</span>
<div style="left:0px;top:1227.0px;width:53px;height:1px;background:#c8c8c8"></div>
<div style="left:53.5px;top:1227.0px;width:3747.2px;height:1px;background:#4472c4"></div>
<span class="t" style="top:1196.79px;font-size:26px;line-height:26px;color:#000;left:60.5px;transform-origin:0 0;transform:scaleX(1.0375);">02-02-2026 17:32</span>
<span class="t" style="top:1196.79px;font-size:26px;line-height:26px;color:#000;right:3326.8px;transform-origin:100% 0;transform:scaleX(1.0372);">36299</span>
<span class="t" style="top:1196.79px;font-size:26px;line-height:26px;color:#000;left:523.2px;transform-origin:0 0;transform:scaleX(0.9960);">ReportServer</span>
<span class="t" style="top:1196.79px;font-size:26px;line-height:26px;color:#000;left:722.5px;transform-origin:0 0;transform:scaleX(0.9948);">Report Server</span>
<span class="t" style="top:1196.79px;font-size:26px;line-height:26px;color:#000;left:1065.8px;transform-origin:0 0;transform:scaleX(0.9254);">ITSVR225</span>
<span class="t" style="top:1196.79px;font-size:26px;line-height:26px;color:#000;left:1242.9px;transform-origin:0 0;transform:scaleX(0.9175);">NT AUTHORITY\NETWORK SERVICE</span>
<span class="t" style="top:1196.79px;font-size:26px;line-height:26px;color:#000;right:1968px;transform-origin:100% 0;transform:scaleX(1.0373);">16</span>
<span class="t" style="top:1196.79px;font-size:26px;line-height:26px;color:#000;right:1756.5px;transform-origin:100% 0;transform:scaleX(1.0372);">50000</span>
<span class="t" style="top:1196.79px;font-size:26px;line-height:26px;color:#000;left:2093.0px;transform-origin:0 0;transform:scaleX(1.0156);">Invalid or Expired Session: b0kze5foxfyisxrrrtfmxyeg</span>
<span class="t" style="top:1234.79px;font-size:26px;line-height:26px;color:#0000ff;left:26.5px;transform-origin:50% 0;transform:translateX(-50%) scaleX(1.0373);">30</span>
<div style="left:0px;top:1265.0px;width:53px;height:1px;background:#c8c8c8"></div>
<div style="left:53.5px;top:1265.0px;width:3747.2px;height:1px;background:#4472c4"></div>
<span class="t" style="top:1234.79px;font-size:26px;line-height:26px;color:#000;left:60.5px;transform-origin:0 0;transform:scaleX(1.0375);">02-02-2026 17:38</span>
<span class="t" style="top:1234.79px;font-size:26px;line-height:26px;color:#000;right:3326.8px;transform-origin:100% 0;transform:scaleX(1.0372);">36300</span>
<span class="t" style="top:1234.79px;font-size:26px;line-height:26px;color:#000;left:523.2px;transform-origin:0 0;transform:scaleX(0.9846);">Fakeram</span>
<span class="t" style="top:1234.79px;font-size:26px;line-height:26px;color:#000;left:722.5px;transform-origin:0 0;transform:scaleX(1.0119);">.Net SqlClient Data Provider</span>
<span class="t" style="top:1234.79px;font-size:26px;line-height:26px;color:#000;left:1065.8px;transform-origin:0 0;transform:scaleX(0.9254);">ITSVR227</span>
<span class="t" style="top:1234.79px;font-size:26px;line-height:26px;color:#000;left:1242.9px;transform-origin:0 0;transform:scaleX(1.0476);">innovator_regular</span>
<span class="t" style="top:1234.79px;font-size:26px;line-height:26px;color:#000;right:1968px;transform-origin:100% 0;transform:scaleX(1.0373);">16</span>
<span class="t" style="top:1234.79px;font-size:26px;line-height:26px;color:#000;right:1756.5px;transform-origin:100% 0;transform:scaleX(1.0373);">9104</span>
<span class="t" style="top:1234.79px;font-size:26px;line-height:26px;color:#000;left:2093.0px;transform-origin:0 0;transform:scaleX(1.0519);">auto statistics internal</span>
<span class="t" style="top:1272.79px;font-size:26px;line-height:26px;color:#0000ff;left:26.5px;transform-origin:50% 0;transform:translateX(-50%) scaleX(1.0373);">31</span>
<div style="left:0px;top:1303.0px;width:53px;height:1px;background:#c8c8c8"></div>
<div style="left:53.5px;top:1303.0px;width:3747.2px;height:1px;background:#4472c4"></div>
<span class="t" style="top:1272.79px;font-size:26px;line-height:26px;color:#000;left:60.5px;transform-origin:0 0;transform:scaleX(1.0375);">02-02-2026 18:01</span>
<span class="t" style="top:1272.79px;font-size:26px;line-height:26px;color:#000;right:3326.8px;transform-origin:100% 0;transform:scaleX(1.0372);">36301</span>
<span class="t" style="top:1272.79px;font-size:26px;line-height:26px;color:#000;left:523.2px;transform-origin:0 0;transform:scaleX(0.9960);">ReportServer</span>
<span class="t" style="top:1272.79px;font-size:26px;line-height:26px;color:#000;left:722.5px;transform-origin:0 0;transform:scaleX(0.9948);">Report Server</span>
<span class="t" style="top:1272.79px;font-size:26px;line-height:26px;color:#000;left:1065.8px;transform-origin:0 0;transform:scaleX(0.9254);">ITSVR225</span>
<span class="t" style="top:1272.79px;font-size:26px;line-height:26px;color:#000;left:1242.9px;transform-origin:0 0;transform:scaleX(0.9175);">NT AUTHORITY\NETWORK SERVICE</span>
<span class="t" style="top:1272.79px;font-size:26px;line-height:26px;color:#000;right:1968px;transform-origin:100% 0;transform:scaleX(1.0373);">16</span>
<span class="t" style="top:1272.79px;font-size:26px;line-height:26px;color:#000;right:1756.5px;transform-origin:100% 0;transform:scaleX(1.0372);">50000</span>
<span class="t" style="top:1272.79px;font-size:26px;line-height:26px;color:#000;left:2093.0px;transform-origin:0 0;transform:scaleX(1.0066);">Expired Session: zljqxa554qquwi45d52iaz45</span>
<span class="t" style="top:1310.79px;font-size:26px;line-height:26px;color:#0000ff;left:26.5px;transform-origin:50% 0;transform:translateX(-50%) scaleX(1.0373);">32</span>
<div style="left:0px;top:1339.0px;width:53px;height:1px;background:#b8b8b8"></div>
<div style="left:0px;top:1343.0px;width:53px;height:1px;background:#b8b8b8"></div>
<div style="left:53.5px;top:1341.0px;width:3747.2px;height:1px;background:#4472c4"></div>
<span class="t" style="top:1310.79px;font-size:26px;line-height:26px;color:#000;left:60.5px;transform-origin:0 0;transform:scaleX(1.0375);">02-02-2026 18:28</span>
<span class="t" style="top:1310.79px;font-size:26px;line-height:26px;color:#000;right:3326.8px;transform-origin:100% 0;transform:scaleX(1.0372);">36302</span>
<span class="t" style="top:1310.79px;font-size:26px;line-height:26px;color:#000;left:523.2px;transform-origin:0 0;transform:scaleX(0.9960);">ReportServer</span>
<span class="t" style="top:1310.79px;font-size:26px;line-height:26px;color:#000;left:722.5px;transform-origin:0 0;transform:scaleX(0.9948);">Report Server</span>
<span class="t" style="top:1310.79px;font-size:26px;line-height:26px;color:#000;left:1065.8px;transform-origin:0 0;transform:scaleX(0.9254);">ITSVR225</span>
<span class="t" style="top:1310.79px;font-size:26px;line-height:26px;color:#000;left:1242.9px;transform-origin:0 0;transform:scaleX(0.9175);">NT AUTHORITY\NETWORK SERVICE</span>
<span class="t" style="top:1310.79px;font-size:26px;line-height:26px;color:#000;right:1968px;transform-origin:100% 0;transform:scaleX(1.0373);">16</span>
<span class="t" style="top:1310.79px;font-size:26px;line-height:26px;color:#000;right:1756.5px;transform-origin:100% 0;transform:scaleX(1.0372);">50000</span>
<span class="t" style="top:1310.79px;font-size:26px;line-height:26px;color:#000;left:2093.0px;transform-origin:0 0;transform:scaleX(1.0184);">Invalid or Expired Session: qq4opa450aomrb2e131lnty3</span>
<span class="t" style="top:1348.79px;font-size:26px;line-height:26px;color:#0000ff;left:26.5px;transform-origin:50% 0;transform:translateX(-50%) scaleX(1.0373);">39</span>
<div style="left:0px;top:1379.0px;width:53px;height:1px;background:#c8c8c8"></div>
<div style="left:53.5px;top:1379.0px;width:3747.2px;height:1px;background:#4472c4"></div>
<span class="t" style="top:1348.79px;font-size:26px;line-height:26px;color:#000;left:60.5px;transform-origin:0 0;transform:scaleX(1.0375);">03-02-2026 04:29</span>
<span class="t" style="top:1348.79px;font-size:26px;line-height:26px;color:#000;right:3326.8px;transform-origin:100% 0;transform:scaleX(1.0372);">36371</span>
<span class="t" style="top:1348.79px;font-size:26px;line-height:26px;color:#000;left:523.2px;transform-origin:0 0;transform:scaleX(0.9846);">Fakeram</span>
<span class="t" style="top:1348.79px;font-size:26px;line-height:26px;color:#000;left:722.5px;transform-origin:0 0;transform:scaleX(1.0119);">.Net SqlClient Data Provider</span>
<span class="t" style="top:1348.79px;font-size:26px;line-height:26px;color:#000;left:1065.8px;transform-origin:0 0;transform:scaleX(0.9254);">ITSVR227</span>
<span class="t" style="top:1348.79px;font-size:26px;line-height:26px;color:#000;left:1242.9px;transform-origin:0 0;transform:scaleX(1.0476);">innovator_regular</span>
<span class="t" style="top:1348.79px;font-size:26px;line-height:26px;color:#000;right:1968px;transform-origin:100% 0;transform:scaleX(1.0373);">16</span>
<span class="t" style="top:1348.79px;font-size:26px;line-height:26px;color:#000;right:1756.5px;transform-origin:100% 0;transform:scaleX(1.0373);">9104</span>
<span class="t" style="top:1348.79px;font-size:26px;line-height:26px;color:#000;left:2093.0px;transform-origin:0 0;transform:scaleX(1.0519);">auto statistics internal</span>
<span class="t" style="top:1386.79px;font-size:26px;line-height:26px;color:#0000ff;left:26.5px;transform-origin:50% 0;transform:translateX(-50%) scaleX(1.0373);">40</span>
<div style="left:0px;top:1417.0px;width:53px;height:1px;background:#c8c8c8"></div>
<div style="left:53.5px;top:1417.0px;width:3747.2px;height:1px;background:#4472c4"></div>
<span class="t" style="top:1386.79px;font-size:26px;line-height:26px;color:#000;left:60.5px;transform-origin:0 0;transform:scaleX(1.0375);">03-02-2026 06:40</span>
<span class="t" style="top:1386.79px;font-size:26px;line-height:26px;color:#000;right:3326.8px;transform-origin:100% 0;transform:scaleX(1.0372);">36372</span>
<span class="t" style="top:1386.79px;font-size:26px;line-height:26px;color:#000;left:523.2px;transform-origin:0 0;transform:scaleX(0.9960);">ReportServer</span>
<span class="t" style="top:1386.79px;font-size:26px;line-height:26px;color:#000;left:722.5px;transform-origin:0 0;transform:scaleX(0.9948);">Report Server</span>
<span class="t" style="top:1386.79px;font-size:26px;line-height:26px;color:#000;left:1065.8px;transform-origin:0 0;transform:scaleX(0.9254);">ITSVR225</span>
<span class="t" style="top:1386.79px;font-size:26px;line-height:26px;color:#000;left:1242.9px;transform-origin:0 0;transform:scaleX(0.9175);">NT AUTHORITY\NETWORK SERVICE</span>
<span class="t" style="top:1386.79px;font-size:26px;line-height:26px;color:#000;right:1968px;transform-origin:100% 0;transform:scaleX(1.0373);">16</span>
<span class="t" style="top:1386.79px;font-size:26px;line-height:26px;color:#000;right:1756.5px;transform-origin:100% 0;transform:scaleX(1.0372);">50000</span>
<span class="t" style="top:1386.79px;font-size:26px;line-height:26px;color:#000;left:2093.0px;transform-origin:0 0;transform:scaleX(1.0108);">Invalid or Expired Session: ga43nb55uwndzljucl52zr45</span>
<span class="t" style="top:1424.79px;font-size:26px;line-height:26px;color:#0000ff;left:26.5px;transform-origin:50% 0;transform:translateX(-50%) scaleX(1.0373);">41</span>
<div style="left:0px;top:1455.0px;width:53px;height:1px;background:#c8c8c8"></div>
<div style="left:53.5px;top:1455.0px;width:3747.2px;height:1px;background:#4472c4"></div>
<span class="t" style="top:1424.79px;font-size:26px;line-height:26px;color:#000;left:60.5px;transform-origin:0 0;transform:scaleX(1.0375);">03-02-2026 06:45</span>
<span class="t" style="top:1424.79px;font-size:26px;line-height:26px;color:#000;right:3326.8px;transform-origin:100% 0;transform:scaleX(1.0372);">36373</span>
<span class="t" style="top:1424.79px;font-size:26px;line-height:26px;color:#000;left:523.2px;transform-origin:0 0;transform:scaleX(0.9960);">ReportServer</span>
<span class="t" style="top:1424.79px;font-size:26px;line-height:26px;color:#000;left:722.5px;transform-origin:0 0;transform:scaleX(0.9948);">Report Server</span>
<span class="t" style="top:1424.79px;font-size:26px;line-height:26px;color:#000;left:1065.8px;transform-origin:0 0;transform:scaleX(0.9254);">ITSVR225</span>
<span class="t" style="top:1424.79px;font-size:26px;line-height:26px;color:#000;left:1242.9px;transform-origin:0 0;transform:scaleX(0.9175);">NT AUTHORITY\NETWORK SERVICE</span>
<span class="t" style="top:1424.79px;font-size:26px;line-height:26px;color:#000;right:1968px;transform-origin:100% 0;transform:scaleX(1.0373);">16</span>
<span class="t" style="top:1424.79px;font-size:26px;line-height:26px;color:#000;right:1756.5px;transform-origin:100% 0;transform:scaleX(1.0372);">50000</span>
<span class="t" style="top:1424.79px;font-size:26px;line-height:26px;color:#000;left:2093.0px;transform-origin:0 0;transform:scaleX(1.0127);">Invalid or Expired Session: 3rarz255pcmwvx553on0qx45</span>
<span class="t" style="top:1462.79px;font-size:26px;line-height:26px;color:#0000ff;left:26.5px;transform-origin:50% 0;transform:translateX(-50%) scaleX(1.0373);">42</span>
<div style="left:0px;top:1493.0px;width:53px;height:1px;background:#c8c8c8"></div>
<div style="left:53.5px;top:1493.0px;width:3747.2px;height:1px;background:#4472c4"></div>
<span class="t" style="top:1462.79px;font-size:26px;line-height:26px;color:#000;left:60.5px;transform-origin:0 0;transform:scaleX(1.0375);">03-02-2026 07:21</span>
<span class="t" style="top:1462.79px;font-size:26px;line-height:26px;color:#000;right:3326.8px;transform-origin:100% 0;transform:scaleX(1.0372);">36436</span>
<span class="t" style="top:1462.79px;font-size:26px;line-height:26px;color:#000;left:523.2px;transform-origin:0 0;transform:scaleX(0.9960);">ReportServer</span>
<span class="t" style="top:1462.79px;font-size:26px;line-height:26px;color:#000;left:722.5px;transform-origin:0 0;transform:scaleX(0.9948);">Report Server</span>
<span class="t" style="top:1462.79px;font-size:26px;line-height:26px;color:#000;left:1065.8px;transform-origin:0 0;transform:scaleX(0.9254);">ITSVR225</span>
<span class="t" style="top:1462.79px;font-size:26px;line-height:26px;color:#000;left:1242.9px;transform-origin:0 0;transform:scaleX(0.9175);">NT AUTHORITY\NETWORK SERVICE</span>
<span class="t" style="top:1462.79px;font-size:26px;line-height:26px;color:#000;right:1968px;transform-origin:100% 0;transform:scaleX(1.0373);">16</span>
<span class="t" style="top:1462.79px;font-size:26px;line-height:26px;color:#000;right:1756.5px;transform-origin:100% 0;transform:scaleX(1.0372);">50000</span>
<span class="t" style="top:1462.79px;font-size:26px;line-height:26px;color:#000;left:2093.0px;transform-origin:0 0;transform:scaleX(1.0079);">Invalid or Expired Session: skfzdh45fpvslp55gflkuw2z</span>
<span class="t" style="top:1500.79px;font-size:26px;line-height:26px;color:#0000ff;left:26.5px;transform-origin:50% 0;transform:translateX(-50%) scaleX(1.0373);">43</span>
<div style="left:0px;top:1531.0px;width:53px;height:1px;background:#c8c8c8"></div>
<div style="left:53.5px;top:1531.0px;width:3747.2px;height:1px;background:#4472c4"></div>
<span class="t" style="top:1500.79px;font-size:26px;line-height:26px;color:#000;left:60.5px;transform-origin:0 0;transform:scaleX(1.0375);">03-02-2026 08:56</span>
<span class="t" style="top:1500.79px;font-size:26px;line-height:26px;color:#000;right:3326.8px;transform-origin:100% 0;transform:scaleX(1.0372);">36438</span>
<span class="t" style="top:1500.79px;font-size:26px;line-height:26px;color:#000;left:523.2px;transform-origin:0 0;transform:scaleX(0.9960);">ReportServer</span>
<span class="t" style="top:1500.79px;font-size:26px;line-height:26px;color:#000;left:722.5px;transform-origin:0 0;transform:scaleX(0.9948);">Report Server</span>
<span class="t" style="top:1500.79px;font-size:26px;line-height:26px;color:#000;left:1065.8px;transform-origin:0 0;transform:scaleX(0.9254);">ITSVR225</span>
<span class="t" style="top:1500.79px;font-size:26px;line-height:26px;color:#000;left:1242.9px;transform-origin:0 0;transform:scaleX(0.9175);">NT AUTHORITY\NETWORK SERVICE</span>
<span class="t" style="top:1500.79px;font-size:26px;line-height:26px;color:#000;right:1968px;transform-origin:100% 0;transform:scaleX(1.0373);">16</span>
<span class="t" style="top:1500.79px;font-size:26px;line-height:26px;color:#000;right:1756.5px;transform-origin:100% 0;transform:scaleX(1.0372);">50000</span>
<span class="t" style="top:1500.79px;font-size:26px;line-height:26px;color:#000;left:2093.0px;transform-origin:0 0;transform:scaleX(1.0156);">Invalid or Expired Session: b0kze5foxfyisxrrrtfmxyeg</span>
<span class="t" style="top:1538.79px;font-size:26px;line-height:26px;color:#0000ff;left:26.5px;transform-origin:50% 0;transform:translateX(-50%) scaleX(1.0373);">44</span>
<div style="left:0px;top:1569.0px;width:53px;height:1px;background:#c8c8c8"></div>
<div style="left:53.5px;top:1569.0px;width:3747.2px;height:1px;background:#4472c4"></div>
<span class="t" style="top:1538.79px;font-size:26px;line-height:26px;color:#000;left:60.5px;transform-origin:0 0;transform:scaleX(1.0375);">03-02-2026 09:55</span>
<span class="t" style="top:1538.79px;font-size:26px;line-height:26px;color:#000;right:3326.8px;transform-origin:100% 0;transform:scaleX(1.0372);">36439</span>
<span class="t" style="top:1538.79px;font-size:26px;line-height:26px;color:#000;left:523.2px;transform-origin:0 0;transform:scaleX(0.9846);">Fakeram</span>
<span class="t" style="top:1538.79px;font-size:26px;line-height:26px;color:#000;left:722.5px;transform-origin:0 0;transform:scaleX(1.0119);">.Net SqlClient Data Provider</span>
<span class="t" style="top:1538.79px;font-size:26px;line-height:26px;color:#000;left:1065.8px;transform-origin:0 0;transform:scaleX(0.9254);">ITSVR224</span>
<span class="t" style="top:1538.79px;font-size:26px;line-height:26px;color:#000;left:1242.9px;transform-origin:0 0;transform:scaleX(1.0476);">innovator_regular</span>
<span class="t" style="top:1538.79px;font-size:26px;line-height:26px;color:#000;right:1968px;transform-origin:100% 0;transform:scaleX(1.0373);">16</span>
<span class="t" style="top:1538.79px;font-size:26px;line-height:26px;color:#000;right:1756.5px;transform-origin:100% 0;transform:scaleX(1.0373);">9104</span>
<span class="t" style="top:1538.79px;font-size:26px;line-height:26px;color:#000;left:2093.0px;transform-origin:0 0;transform:scaleX(1.0519);">auto statistics internal</span>
<span class="t" style="top:1576.79px;font-size:26px;line-height:26px;color:#0000ff;left:26.5px;transform-origin:50% 0;transform:translateX(-50%) scaleX(1.0373);">45</span>
<div style="left:0px;top:1607.0px;width:53px;height:1px;background:#c8c8c8"></div>
<div style="left:53.5px;top:1607.0px;width:3747.2px;height:1px;background:#4472c4"></div>
<span class="t" style="top:1576.79px;font-size:26px;line-height:26px;color:#000;left:60.5px;transform-origin:0 0;transform:scaleX(1.0375);">03-02-2026 10:17</span>
<span class="t" style="top:1576.79px;font-size:26px;line-height:26px;color:#000;right:3326.8px;transform-origin:100% 0;transform:scaleX(1.0372);">36441</span>
<span class="t" style="top:1576.79px;font-size:26px;line-height:26px;color:#000;left:523.2px;transform-origin:0 0;transform:scaleX(0.9960);">ReportServer</span>
<span class="t" style="top:1576.79px;font-size:26px;line-height:26px;color:#000;left:722.5px;transform-origin:0 0;transform:scaleX(0.9948);">Report Server</span>
<span class="t" style="top:1576.79px;font-size:26px;line-height:26px;color:#000;left:1065.8px;transform-origin:0 0;transform:scaleX(0.9254);">ITSVR225</span>
<span class="t" style="top:1576.79px;font-size:26px;line-height:26px;color:#000;left:1242.9px;transform-origin:0 0;transform:scaleX(0.9175);">NT AUTHORITY\NETWORK SERVICE</span>
<span class="t" style="top:1576.79px;font-size:26px;line-height:26px;color:#000;right:1968px;transform-origin:100% 0;transform:scaleX(1.0373);">16</span>
<span class="t" style="top:1576.79px;font-size:26px;line-height:26px;color:#000;right:1756.5px;transform-origin:100% 0;transform:scaleX(1.0372);">50000</span>
<span class="t" style="top:1576.79px;font-size:26px;line-height:26px;color:#000;left:2093.0px;transform-origin:0 0;transform:scaleX(1.0144);">Invalid or Expired Session: f0cyi4qpiikihy45q33kcnmc</span>
<span class="t" style="top:1614.79px;font-size:26px;line-height:26px;color:#0000ff;left:26.5px;transform-origin:50% 0;transform:translateX(-50%) scaleX(1.0373);">46</span>
<div style="left:0px;top:1645.0px;width:53px;height:1px;background:#c8c8c8"></div>
<div style="left:53.5px;top:1645.0px;width:3747.2px;height:1px;background:#4472c4"></div>
<span class="t" style="top:1614.79px;font-size:26px;line-height:26px;color:#000;left:60.5px;transform-origin:0 0;transform:scaleX(1.0375);">03-02-2026 10:51</span>
<span class="t" style="top:1614.79px;font-size:26px;line-height:26px;color:#000;right:3326.8px;transform-origin:100% 0;transform:scaleX(1.0372);">36442</span>
<span class="t" style="top:1614.79px;font-size:26px;line-height:26px;color:#000;left:523.2px;transform-origin:0 0;transform:scaleX(0.9846);">Fakeram</span>
<span class="t" style="top:1614.79px;font-size:26px;line-height:26px;color:#000;left:722.5px;transform-origin:0 0;transform:scaleX(1.0119);">.Net SqlClient Data Provider</span>
<span class="t" style="top:1614.79px;font-size:26px;line-height:26px;color:#000;left:1065.8px;transform-origin:0 0;transform:scaleX(0.9100);">ITSVR83</span>
<span class="t" style="top:1614.79px;font-size:26px;line-height:26px;color:#000;left:1242.9px;transform-origin:0 0;transform:scaleX(1.0657);">innovator</span>
<span class="t" style="top:1614.79px;font-size:26px;line-height:26px;color:#000;right:1968px;transform-origin:100% 0;transform:scaleX(1.0373);">16</span>
<span class="t" style="top:1614.79px;font-size:26px;line-height:26px;color:#000;right:1756.5px;transform-origin:100% 0;transform:scaleX(1.0371);">207</span>
<span class="t" style="top:1614.79px;font-size:26px;line-height:26px;color:#000;left:2093.0px;transform-origin:0 0;transform:scaleX(1.0077);">Invalid column name 'TIPO'.</span>
<span class="t" style="top:1652.79px;font-size:26px;line-height:26px;color:#0000ff;left:26.5px;transform-origin:50% 0;transform:translateX(-50%) scaleX(1.0373);">47</span>
<div style="left:0px;top:1683.0px;width:53px;height:1px;background:#c8c8c8"></div>
<div style="left:53.5px;top:1683.0px;width:3747.2px;height:1px;background:#4472c4"></div>
<span class="t" style="top:1652.79px;font-size:26px;line-height:26px;color:#000;left:60.5px;transform-origin:0 0;transform:scaleX(1.0474);">03-02-2026 11:34</span>
<span class="t" style="top:1652.79px;font-size:26px;line-height:26px;color:#000;right:3326.8px;transform-origin:100% 0;transform:scaleX(1.0372);">36444</span>
<span class="t" style="top:1652.79px;font-size:26px;line-height:26px;color:#000;left:523.2px;transform-origin:0 0;transform:scaleX(0.9846);">Fakeram</span>
<span class="t" style="top:1652.79px;font-size:26px;line-height:26px;color:#000;left:722.5px;transform-origin:0 0;transform:scaleX(1.0119);">.Net SqlClient Data Provider</span>
<span class="t" style="top:1652.79px;font-size:26px;line-height:26px;color:#000;left:1065.8px;transform-origin:0 0;transform:scaleX(0.9254);">ITSVR227</span>
<span class="t" style="top:1652.79px;font-size:26px;line-height:26px;color:#000;left:1242.9px;transform-origin:0 0;transform:scaleX(1.0476);">innovator_regular</span>
<span class="t" style="top:1652.79px;font-size:26px;line-height:26px;color:#000;right:1968px;transform-origin:100% 0;transform:scaleX(1.0373);">16</span>
<span class="t" style="top:1652.79px;font-size:26px;line-height:26px;color:#000;right:1756.5px;transform-origin:100% 0;transform:scaleX(1.0373);">9104</span>
<span class="t" style="top:1652.79px;font-size:26px;line-height:26px;color:#000;left:2093.0px;transform-origin:0 0;transform:scaleX(1.0519);">auto statistics internal</span>
<span class="t" style="top:1690.79px;font-size:26px;line-height:26px;color:#0000ff;left:26.5px;transform-origin:50% 0;transform:translateX(-50%) scaleX(1.0373);">48</span>
<div style="left:0px;top:1721.0px;width:53px;height:1px;background:#c8c8c8"></div>
<div style="left:53.5px;top:1721.0px;width:3747.2px;height:1px;background:#4472c4"></div>
<span class="t" style="top:1690.79px;font-size:26px;line-height:26px;color:#000;left:60.5px;transform-origin:0 0;transform:scaleX(1.0474);">03-02-2026 11:36</span>
<span class="t" style="top:1690.79px;font-size:26px;line-height:26px;color:#000;right:3326.8px;transform-origin:100% 0;transform:scaleX(1.0372);">36445</span>
<span class="t" style="top:1690.79px;font-size:26px;line-height:26px;color:#000;left:523.2px;transform-origin:0 0;transform:scaleX(0.9846);">Fakeram</span>
<span class="t" style="top:1690.79px;font-size:26px;line-height:26px;color:#000;left:722.5px;transform-origin:0 0;transform:scaleX(1.0119);">.Net SqlClient Data Provider</span>
<span class="t" style="top:1690.79px;font-size:26px;line-height:26px;color:#000;left:1065.8px;transform-origin:0 0;transform:scaleX(0.9254);">ITSVR227</span>
<span class="t" style="top:1690.79px;font-size:26px;line-height:26px;color:#000;left:1242.9px;transform-origin:0 0;transform:scaleX(1.0476);">innovator_regular</span>
<span class="t" style="top:1690.79px;font-size:26px;line-height:26px;color:#000;right:1968px;transform-origin:100% 0;transform:scaleX(1.0373);">16</span>
<span class="t" style="top:1690.79px;font-size:26px;line-height:26px;color:#000;right:1756.5px;transform-origin:100% 0;transform:scaleX(1.0373);">9104</span>
<span class="t" style="top:1690.79px;font-size:26px;line-height:26px;color:#000;left:2093.0px;transform-origin:0 0;transform:scaleX(1.0519);">auto statistics internal</span>
<span class="t" style="top:1728.79px;font-size:26px;line-height:26px;color:#0000ff;left:26.5px;transform-origin:50% 0;transform:translateX(-50%) scaleX(1.0373);">49</span>
<div style="left:0px;top:1759.0px;width:53px;height:1px;background:#c8c8c8"></div>
<div style="left:53.5px;top:1759.0px;width:3747.2px;height:1px;background:#4472c4"></div>
<span class="t" style="top:1728.79px;font-size:26px;line-height:26px;color:#000;left:60.5px;transform-origin:0 0;transform:scaleX(1.0375);">03-02-2026 12:40</span>
<span class="t" style="top:1728.79px;font-size:26px;line-height:26px;color:#000;right:3326.8px;transform-origin:100% 0;transform:scaleX(1.0372);">36447</span>
<span class="t" style="top:1728.79px;font-size:26px;line-height:26px;color:#000;left:523.2px;transform-origin:0 0;transform:scaleX(0.9846);">Fakeram</span>
<span class="t" style="top:1728.79px;font-size:26px;line-height:26px;color:#000;left:722.5px;transform-origin:0 0;transform:scaleX(1.0119);">.Net SqlClient Data Provider</span>
<span class="t" style="top:1728.79px;font-size:26px;line-height:26px;color:#000;left:1065.8px;transform-origin:0 0;transform:scaleX(0.9254);">ITSVR227</span>
<span class="t" style="top:1728.79px;font-size:26px;line-height:26px;color:#000;left:1242.9px;transform-origin:0 0;transform:scaleX(1.0476);">innovator_regular</span>
<span class="t" style="top:1728.79px;font-size:26px;line-height:26px;color:#000;right:1968px;transform-origin:100% 0;transform:scaleX(1.0373);">16</span>
<span class="t" style="top:1728.79px;font-size:26px;line-height:26px;color:#000;right:1756.5px;transform-origin:100% 0;transform:scaleX(1.0373);">9104</span>
<span class="t" style="top:1728.79px;font-size:26px;line-height:26px;color:#000;left:2093.0px;transform-origin:0 0;transform:scaleX(1.0519);">auto statistics internal</span>
<span class="t" style="top:1766.79px;font-size:26px;line-height:26px;color:#0000ff;left:26.5px;transform-origin:50% 0;transform:translateX(-50%) scaleX(1.0373);">50</span>
<div style="left:0px;top:1797.0px;width:53px;height:1px;background:#c8c8c8"></div>
<div style="left:53.5px;top:1797.0px;width:3747.2px;height:1px;background:#4472c4"></div>
<span class="t" style="top:1766.79px;font-size:26px;line-height:26px;color:#000;left:60.5px;transform-origin:0 0;transform:scaleX(1.0474);">03-02-2026 13:11</span>
<span class="t" style="top:1766.79px;font-size:26px;line-height:26px;color:#000;right:3326.8px;transform-origin:100% 0;transform:scaleX(1.0372);">36448</span>
<span class="t" style="top:1766.79px;font-size:26px;line-height:26px;color:#000;left:523.2px;transform-origin:0 0;transform:scaleX(0.9846);">Fakeram</span>
<span class="t" style="top:1766.79px;font-size:26px;line-height:26px;color:#000;left:722.5px;transform-origin:0 0;transform:scaleX(1.0119);">.Net SqlClient Data Provider</span>
<span class="t" style="top:1766.79px;font-size:26px;line-height:26px;color:#000;left:1065.8px;transform-origin:0 0;transform:scaleX(0.9254);">ITSVR227</span>
<span class="t" style="top:1766.79px;font-size:26px;line-height:26px;color:#000;left:1242.9px;transform-origin:0 0;transform:scaleX(1.0476);">innovator_regular</span>
<span class="t" style="top:1766.79px;font-size:26px;line-height:26px;color:#000;right:1968px;transform-origin:100% 0;transform:scaleX(1.0373);">16</span>
<span class="t" style="top:1766.79px;font-size:26px;line-height:26px;color:#000;right:1756.5px;transform-origin:100% 0;transform:scaleX(1.0373);">9104</span>
<span class="t" style="top:1766.79px;font-size:26px;line-height:26px;color:#000;left:2093.0px;transform-origin:0 0;transform:scaleX(1.0519);">auto statistics internal</span>
<span class="t" style="top:1804.79px;font-size:26px;line-height:26px;color:#0000ff;left:26.5px;transform-origin:50% 0;transform:translateX(-50%) scaleX(1.0373);">51</span>
<div style="left:0px;top:1835.0px;width:53px;height:1px;background:#c8c8c8"></div>
<div style="left:53.5px;top:1835.0px;width:3747.2px;height:1px;background:#4472c4"></div>
<span class="t" style="top:1804.79px;font-size:26px;line-height:26px;color:#000;left:60.5px;transform-origin:0 0;transform:scaleX(1.0375);">03-02-2026 13:24</span>
<span class="t" style="top:1804.79px;font-size:26px;line-height:26px;color:#000;right:3326.8px;transform-origin:100% 0;transform:scaleX(1.0372);">36449</span>
<span class="t" style="top:1804.79px;font-size:26px;line-height:26px;color:#000;left:523.2px;transform-origin:0 0;transform:scaleX(0.9960);">ReportServer</span>
<span class="t" style="top:1804.79px;font-size:26px;line-height:26px;color:#000;left:722.5px;transform-origin:0 0;transform:scaleX(0.9948);">Report Server</span>
<span class="t" style="top:1804.79px;font-size:26px;line-height:26px;color:#000;left:1065.8px;transform-origin:0 0;transform:scaleX(0.9254);">ITSVR225</span>
<span class="t" style="top:1804.79px;font-size:26px;line-height:26px;color:#000;left:1242.9px;transform-origin:0 0;transform:scaleX(0.9175);">NT AUTHORITY\NETWORK SERVICE</span>
<span class="t" style="top:1804.79px;font-size:26px;line-height:26px;color:#000;right:1968px;transform-origin:100% 0;transform:scaleX(1.0373);">16</span>
<span class="t" style="top:1804.79px;font-size:26px;line-height:26px;color:#000;right:1756.5px;transform-origin:100% 0;transform:scaleX(1.0372);">50000</span>
<span class="t" style="top:1804.79px;font-size:26px;line-height:26px;color:#000;left:2093.0px;transform-origin:0 0;transform:scaleX(1.0131);">Invalid or Expired Session: zfhhrq3gkuwckefallbsb4il</span>
<span class="t" style="top:1842.79px;font-size:26px;line-height:26px;color:#0000ff;left:26.5px;transform-origin:50% 0;transform:translateX(-50%) scaleX(1.0373);">52</span>
<div style="left:0px;top:1873.0px;width:53px;height:1px;background:#c8c8c8"></div>
<div style="left:53.5px;top:1873.0px;width:3747.2px;height:1px;background:#4472c4"></div>
<span class="t" style="top:1842.79px;font-size:26px;line-height:26px;color:#000;left:60.5px;transform-origin:0 0;transform:scaleX(1.0375);">03-02-2026 16:00</span>
<span class="t" style="top:1842.79px;font-size:26px;line-height:26px;color:#000;right:3326.8px;transform-origin:100% 0;transform:scaleX(1.0372);">36465</span>
<span class="t" style="top:1842.79px;font-size:26px;line-height:26px;color:#000;left:523.2px;transform-origin:0 0;transform:scaleX(0.9846);">Fakeram</span>
<span class="t" style="top:1842.79px;font-size:26px;line-height:26px;color:#000;left:722.5px;transform-origin:0 0;transform:scaleX(1.0119);">.Net SqlClient Data Provider</span>
<span class="t" style="top:1842.79px;font-size:26px;line-height:26px;color:#000;left:1065.8px;transform-origin:0 0;transform:scaleX(0.9254);">ITSVR227</span>
<span class="t" style="top:1842.79px;font-size:26px;line-height:26px;color:#000;left:1242.9px;transform-origin:0 0;transform:scaleX(1.0476);">innovator_regular</span>
<span class="t" style="top:1842.79px;font-size:26px;line-height:26px;color:#000;right:1968px;transform-origin:100% 0;transform:scaleX(1.0373);">16</span>
<span class="t" style="top:1842.79px;font-size:26px;line-height:26px;color:#000;right:1756.5px;transform-origin:100% 0;transform:scaleX(1.0371);">208</span>
<span class="t" style="top:1842.79px;font-size:26px;line-height:26px;color:#000;left:2093.0px;transform-origin:0 0;transform:scaleX(0.9408);">Invalid object name 'CLOSEPROJECTWITHOPENBOMBYTASK'.</span>
<span class="t" style="top:1880.79px;font-size:26px;line-height:26px;color:#0000ff;left:26.5px;transform-origin:50% 0;transform:translateX(-50%) scaleX(1.0373);">53</span>
<div style="left:0px;top:1911.0px;width:53px;height:1px;background:#c8c8c8"></div>
<div style="left:53.5px;top:1911.0px;width:3747.2px;height:1px;background:#4472c4"></div>
<span class="t" style="top:1880.79px;font-size:26px;line-height:26px;color:#000;left:60.5px;transform-origin:0 0;transform:scaleX(1.0375);">03-02-2026 16:29</span>
<span class="t" style="top:1880.79px;font-size:26px;line-height:26px;color:#000;right:3326.8px;transform-origin:100% 0;transform:scaleX(1.0372);">36466</span>
<span class="t" style="top:1880.79px;font-size:26px;line-height:26px;color:#000;left:523.2px;transform-origin:0 0;transform:scaleX(0.9846);">Fakeram</span>
<span class="t" style="top:1880.79px;font-size:26px;line-height:26px;color:#000;left:722.5px;transform-origin:0 0;transform:scaleX(0.8981);">SQLServerCEIP</span>
<span class="t" style="top:1880.79px;font-size:26px;line-height:26px;color:#000;left:1065.8px;transform-origin:0 0;transform:scaleX(0.9254);">ITSVR225</span>
<span class="t" style="top:1880.79px;font-size:26px;line-height:26px;color:#000;left:1242.9px;transform-origin:0 0;transform:scaleX(0.8914);">NT SERVICE\SQLTELEMETRY</span>
<span class="t" style="top:1880.79px;font-size:26px;line-height:26px;color:#000;right:1968px;transform-origin:100% 0;transform:scaleX(1.0373);">16</span>
<span class="t" style="top:1880.79px;font-size:26px;line-height:26px;color:#000;right:1756.5px;transform-origin:100% 0;transform:scaleX(1.0373);">8622</span>
<span class="t" style="top:1880.79px;font-size:26px;line-height:26px;color:#000;left:2093.0px;transform-origin:0 0;transform:scaleX(1.0300);">Query processor could not produce a query plan because of the hints defined in this query. Resubmit the query without specifying any hints and witho</span>
<span class="t" style="top:1918.79px;font-size:26px;line-height:26px;color:#0000ff;left:26.5px;transform-origin:50% 0;transform:translateX(-50%) scaleX(1.0373);">54</span>
<div style="left:0px;top:1949.0px;width:53px;height:1px;background:#c8c8c8"></div>
<div style="left:53.5px;top:1949.0px;width:3747.2px;height:1px;background:#4472c4"></div>
<span class="t" style="top:1918.79px;font-size:26px;line-height:26px;color:#000;left:60.5px;transform-origin:0 0;transform:scaleX(1.0375);">03-02-2026 16:29</span>
<span class="t" style="top:1918.79px;font-size:26px;line-height:26px;color:#000;right:3326.8px;transform-origin:100% 0;transform:scaleX(1.0372);">36467</span>
<span class="t" style="top:1918.79px;font-size:26px;line-height:26px;color:#000;left:523.2px;transform-origin:0 0;transform:scaleX(0.9846);">Fakeram</span>
<span class="t" style="top:1918.79px;font-size:26px;line-height:26px;color:#000;left:722.5px;transform-origin:0 0;transform:scaleX(0.8981);">SQLServerCEIP</span>
<span class="t" style="top:1918.79px;font-size:26px;line-height:26px;color:#000;left:1065.8px;transform-origin:0 0;transform:scaleX(0.9254);">ITSVR225</span>
<span class="t" style="top:1918.79px;font-size:26px;line-height:26px;color:#000;left:1242.9px;transform-origin:0 0;transform:scaleX(0.8914);">NT SERVICE\SQLTELEMETRY</span>
<span class="t" style="top:1918.79px;font-size:26px;line-height:26px;color:#000;right:1968px;transform-origin:100% 0;transform:scaleX(1.0373);">16</span>
<span class="t" style="top:1918.79px;font-size:26px;line-height:26px;color:#000;right:1756.5px;transform-origin:100% 0;transform:scaleX(1.0373);">8622</span>
<span class="t" style="top:1918.79px;font-size:26px;line-height:26px;color:#000;left:2093.0px;transform-origin:0 0;transform:scaleX(1.0300);">Query processor could not produce a query plan because of the hints defined in this query. Resubmit the query without specifying any hints and witho</span>
<div style="left:516.2px;top:579.5px;width:203.79999999999995px;height:41.5px;border:3px solid #107238;box-sizing:border-box"></div>
<div style="left:714.0px;top:615.0px;width:8.5px;height:8.5px;background:#107238;border:1px solid #fff"></div>
<div style="left:50.5px;top:581.5px;width:3px;height:38px;background:#107238"></div>
<div style="left:0px;top:1956px;width:3840px;height:20px;background:#fff"></div>
<div style="left:0px;top:1956px;width:215.5px;height:64px;background:#ede8e5;border-radius:0 13px 0 0"></div>
<div style="left:645.5px;top:1956px;width:3195px;height:64px;background:#ede8e5;border-radius:13px 0 0 0"></div>
<div style="left:0px;top:1990px;width:3840px;height:30px;background:#ede8e5"></div>
<svg style="left:38px;top:1974px;" width="20" height="26" viewBox="0 0 20 26"><path d="M14 3 L5 13 L14 23" fill="none" stroke="#8a8a8a" stroke-width="1.8"/></svg>
<svg style="left:101px;top:1974px;" width="20" height="26" viewBox="0 0 20 26"><path d="M6 3 L15 13 L6 23" fill="none" stroke="#8a8a8a" stroke-width="1.8"/></svg>
<div style="left:215.5px;top:1950px;width:430px;height:62px;background:#fff;border-radius:0 0 13px 13px;box-shadow:0 1px 1.5px rgba(0,0,0,0.12)"></div>
<span class="t" style="top:1969.64px;font-size:27px;line-height:27px;color:#1f1f1f;-webkit-text-stroke:0.9px #1f1f1f;left:233px;transform-origin:0 0;transform:scaleX(1.0240);">Error List-data-2026-02-13 18_4</span>
<div style="left:232px;top:2001.5px;width:397px;height:4.5px;background:#107238;border-radius:2px"></div>
<div style="left:653px;top:1971px;width:2px;height:35px;background:#c4c0bd"></div>
<svg style="left:736px;top:1972px;" width="28" height="28" viewBox="0 0 28 28"><path d="M14 2.5 V25.5 M2.5 14 H25.5" stroke="#444" stroke-width="2"/></svg>
<div style="left:3800.7px;top:415px;width:39.3px;height:1545px;background:linear-gradient(180deg,#e6edf1 0%,#e6edf1 30%,#ebebe9 65%,#ede8e5 100%)"></div>
<div style="left:3804px;top:429.7px;width:34px;height:1528.6px;background:#f5f5f5;border-radius:17px"></div>
<svg style="left:3810px;top:438px;" width="22" height="18" viewBox="0 0 22 18"><path d="M11 2.5 L20 14.5 Q20.5 16 19 16 H3 Q1.5 16 2 14.5 Z" fill="#6f6f6f"/></svg>
<div style="left:3813px;top:463.5px;width:16px;height:244px;background:#6f7170;border-radius:8px"></div>
<svg style="left:3810px;top:1932px;" width="22" height="18" viewBox="0 0 22 18"><path d="M11 15.5 L20 3.5 Q20.5 2 19 2 H3 Q1.5 2 2 3.5 Z" fill="#6f6f6f"/></svg>
<svg style="left:2309px;top:1975px;" width="9" height="25" viewBox="0 0 9 25"><circle cx="4.5" cy="3" r="2.3" fill="#444"/><circle cx="4.5" cy="12" r="2.3" fill="#444"/><circle cx="4.5" cy="21" r="2.3" fill="#444"/></svg>
<div style="left:2344.5px;top:1970.5px;width:1459px;height:33.5px;background:#f4f4f4;border-radius:17px"></div>
<svg style="left:2352px;top:1977px;" width="18" height="20" viewBox="0 0 18 20"><path d="M3 10 L15 2.5 Q16.5 1.5 16.5 3.5 V16.5 Q16.5 18.5 15 17.5 Z" fill="#6f6f6f"/></svg>
<div style="left:2379px;top:1978.5px;width:252px;height:18px;background:#6f7170;border-radius:9px"></div>
<svg style="left:3778px;top:1977px;" width="18" height="20" viewBox="0 0 18 20"><path d="M15 10 L3 2.5 Q1.5 1.5 1.5 3.5 V16.5 Q1.5 18.5 3 17.5 Z" fill="#6f6f6f"/></svg>
<div style="left:0px;top:2020px;width:3840px;height:44px;background:#f3f3f3"></div>
<span class="t" style="top:2034.00px;font-size:21.5px;line-height:21.5px;color:#333;left:24.2px;transform-origin:0 0;transform:scaleX(0.8849);">Ready</span>
<span class="t" style="top:2034.00px;font-size:21.5px;line-height:21.5px;color:#333;left:111.2px;transform-origin:0 0;transform:scaleX(0.9638);">191 of 280 records found</span>
<svg style="left:380px;top:2027px;" width="32" height="32" viewBox="0 0 32 32">
<circle cx="13.5" cy="6" r="3.6" fill="none" stroke="#333" stroke-width="1.9"/>
<path d="M3 10.5 Q6 13.5 9 14 V20 L6.5 28.5 Q7 30 8.5 29.5 L12.5 22 L14 24 M9 14 H17.5 Q21 13 24 10" fill="none" stroke="#333" stroke-width="1.9" stroke-linejoin="round"/>
<path d="M19 18 Q19 14.5 23 14.5 Q27 14.5 27 18 Q27 21 23.5 22.5 V25 M23.5 28.5 V29.5" fill="none" stroke="#333" stroke-width="1.9"/>
</svg>
<span class="t" style="top:2034.00px;font-size:21.5px;line-height:21.5px;color:#333;left:417.7px;transform-origin:0 0;transform:scaleX(0.9458);">Accessibility: Unavailable</span>
<span class="t" style="top:2033.90px;font-size:21.5px;line-height:21.5px;color:#333;left:2441.7px;transform-origin:0 0;transform:scaleX(0.9250);">Average: 26863.89282</span>
<span class="t" style="top:2033.90px;font-size:21.5px;line-height:21.5px;color:#333;left:2675.4px;transform-origin:0 0;transform:scaleX(0.9389);">Count: 1728</span>
<span class="t" style="top:2033.90px;font-size:21.5px;line-height:21.5px;color:#333;left:2818.3px;transform-origin:0 0;transform:scaleX(0.9228);">Sum: 20524014.11</span>
<svg style="left:3023px;top:2029px;" width="32" height="29" viewBox="0 0 32 29">
<path d="M14 20 H2.5 V2.5 H28.5 V12" fill="none" stroke="#333" stroke-width="1.8"/>
<circle cx="19.5" cy="19.5" r="5" fill="none" stroke="#333" stroke-width="3" stroke-dasharray="2.2 1.7"/>
<circle cx="19.5" cy="19.5" r="2" fill="#333"/>
</svg>
<span class="t" style="top:2034.00px;font-size:21.5px;line-height:21.5px;color:#333;left:3060.3px;transform-origin:0 0;transform:scaleX(0.9413);">Display Settings</span>
<div style="left:3244px;top:2022.5px;width:80px;height:41.5px;background:#dddddd"></div>
<svg style="left:3268px;top:2028px;" width="30" height="29" viewBox="0 0 30 29"><rect x="2" y="2" width="26" height="25" fill="none" stroke="#222" stroke-width="2"/><path d="M10.7 2 V27 M19.3 2 V27 M2 10.3 H28 M2 18.6 H28" stroke="#222" stroke-width="2"/></svg>
<svg style="left:3349px;top:2028px;" width="31" height="29" viewBox="0 0 31 29"><rect x="2" y="2" width="27" height="25" fill="none" stroke="#222" stroke-width="2"/><rect x="7" y="7" width="17" height="15" fill="none" stroke="#222" stroke-width="1.8"/><path d="M10.5 11 H20.5 M10.5 14.5 H20.5 M10.5 18 H20.5" stroke="#222" stroke-width="1.6"/></svg>
<svg style="left:3428px;top:2028px;" width="32" height="29" viewBox="0 0 32 29"><rect x="2" y="2" width="28" height="25" fill="none" stroke="#222" stroke-width="2"/><path d="M10 2 V14 H19 V2" fill="none" stroke="#222" stroke-width="2"/></svg>
<div style="left:3496px;top:2042px;width:15px;height:1.6px;background:#555"></div>
<div style="left:3522.7px;top:2042px;width:198px;height:2px;background:#6a6a6a"></div>
<div style="left:3617px;top:2032px;width:10px;height:22.5px;background:#6a6a6a;border-radius:1.5px"></div>
<svg style="left:3731px;top:2034px;" width="17" height="17" viewBox="0 0 17 17"><path d="M8.5 1 V16 M1 8.5 H16" stroke="#444" stroke-width="1.7"/></svg>
<span class="t" style="top:2034.00px;font-size:21.5px;line-height:21.5px;color:#333;left:3774.4px;transform-origin:0 0;transform:scaleX(0.8727);">100%</span>
</body></html>
